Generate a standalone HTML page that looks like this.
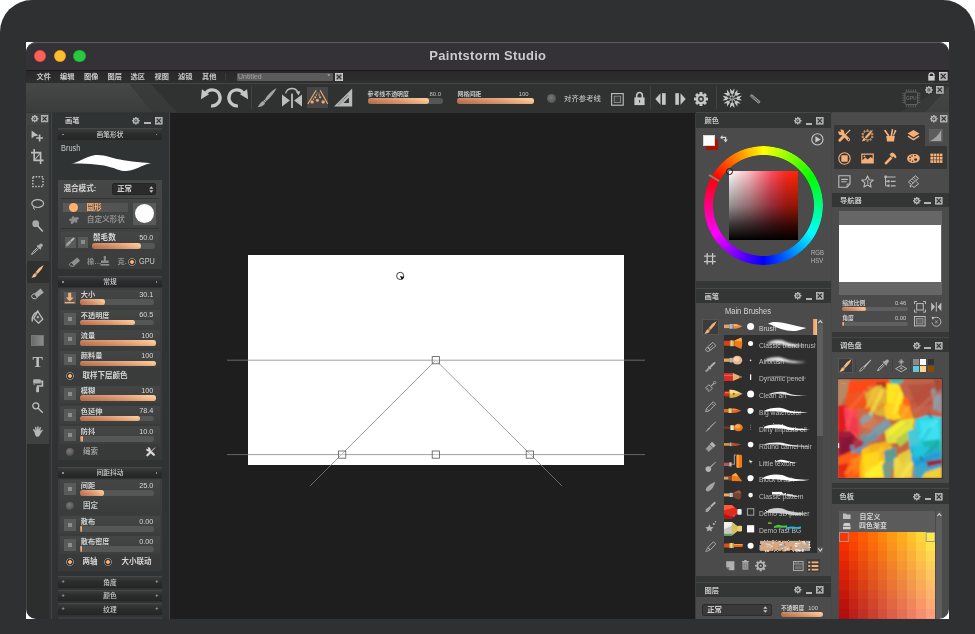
<!DOCTYPE html>
<html lang="zh"><head><meta charset="utf-8"><title>Paintstorm Studio</title>
<style>
html,body{margin:0;padding:0;background:#fff;}
body{width:975px;height:634px;overflow:hidden;position:relative;font-family:"Liberation Sans","Noto Sans CJK SC",sans-serif;}
#root{position:absolute;left:0;top:0;width:975px;height:634px;overflow:hidden;will-change:transform;}
#root div{position:absolute;box-sizing:border-box;}
.t{white-space:nowrap;}
.n{transform:scaleX(0.885);transform-origin:0 0;}
.nr{transform:scaleX(0.9);transform-origin:100% 0;}
.i{position:absolute;display:block;overflow:visible;}
</style></head>
<body><div id="root">
<!-- top -->
<div style="left:0px;top:0px;width:975px;height:634px;background:#2f3032;border-radius:32px 32px 0 0;"></div><div style="left:26px;top:42px;width:923px;height:577px;background:#fff;"></div><div id="win" style="left:26px;top:42px;width:923px;height:577px;background:#1e1e1e;border-radius:10.5px 10.5px 10px 10px;overflow:hidden;"></div><div style="left:25.7px;top:41.7px;width:923.4px;height:28.8px;background:#343137;border-radius:10.5px 10.5px 0 0;border-top:1px solid #5d5b60;"></div><div style="left:33.800000000000004px;top:49.5px;width:12.6px;height:12.6px;background:#fe5f57;border-radius:50%;box-shadow:inset 0 0 0 0.6px rgba(0,0,0,0.25);"></div><div style="left:53.6px;top:49.5px;width:12.6px;height:12.6px;background:#febc2e;border-radius:50%;box-shadow:inset 0 0 0 0.6px rgba(0,0,0,0.25);"></div><div style="left:73.4px;top:49.5px;width:12.6px;height:12.6px;background:#28c840;border-radius:50%;box-shadow:inset 0 0 0 0.6px rgba(0,0,0,0.25);"></div><div class="t" style="left:26px;top:48.1px;font-size:13px;color:#cbcacc;font-weight:700;width:923.6px;text-align:center;line-height:16px;letter-spacing:0.3px;">Paintstorm Studio</div><div style="left:25.7px;top:70.2px;width:923.4px;height:12.8px;background:linear-gradient(180deg,#29292a,#2e2f2f);border-top:1px solid #19191a;"></div><div class="t" style="left:36.5px;top:71.9px;font-size:7.2px;color:#cacaca;font-weight:700;line-height:10px;">文件</div><div class="t" style="left:60px;top:71.9px;font-size:7.2px;color:#cacaca;font-weight:700;line-height:10px;">编辑</div><div class="t" style="left:84px;top:71.9px;font-size:7.2px;color:#cacaca;font-weight:700;line-height:10px;">图像</div><div class="t" style="left:107.5px;top:71.9px;font-size:7.2px;color:#cacaca;font-weight:700;line-height:10px;">图层</div><div class="t" style="left:130.5px;top:71.9px;font-size:7.2px;color:#cacaca;font-weight:700;line-height:10px;">选区</div><div class="t" style="left:154.5px;top:71.9px;font-size:7.2px;color:#cacaca;font-weight:700;line-height:10px;">视图</div><div class="t" style="left:178px;top:71.9px;font-size:7.2px;color:#cacaca;font-weight:700;line-height:10px;">滤镜</div><div class="t" style="left:202px;top:71.9px;font-size:7.2px;color:#cacaca;font-weight:700;line-height:10px;">其他</div><div style="left:225px;top:73px;width:1px;height:8px;background:#3a3a3a;"></div><div style="left:236.5px;top:72.5px;width:96px;height:8.6px;background:#5b5b5b;border-radius:1px;"></div><div class="t" style="left:238px;top:72.2px;font-size:7px;color:#a4a4a4;line-height:10px;">Untitled</div><div class="t" style="left:327.5px;top:71.5px;font-size:6px;color:#ccc;line-height:8px;">*</div><svg class="i" style="left:334.8px;top:72.8px;" width="8" height="8" viewBox="0 0 16 16"><rect x="0.8" y="0.8" width="14.4" height="14.4" fill="#a4a4a4" stroke="#d8d8d8" stroke-width="1.6"/><path d="M3.6 3.6 L12.4 12.4 M12.4 3.6 L3.6 12.4" stroke="#2e2e2e" stroke-width="2.3"/></svg><svg class="i" style="left:927.5px;top:71.8px;" width="7" height="9" viewBox="0 0 7 9"><path d="M3.5 4.5V3a2.5 2.5 0 0 1 5 0v1.5" transform="translate(-2.5 0.3)" fill="none" stroke="#ccc" stroke-width="1.3"/><rect x="0.3" y="4" width="6.4" height="4.6" fill="#ccc"/></svg><svg class="i" style="left:939px;top:72.2px;" width="8.5" height="8.5" viewBox="0 0 16 16"><rect x="0.8" y="0.8" width="14.4" height="14.4" fill="#a4a4a4" stroke="#d8d8d8" stroke-width="1.6"/><path d="M3.6 3.6 L12.4 12.4 M12.4 3.6 L3.6 12.4" stroke="#2e2e2e" stroke-width="2.3"/></svg><div style="left:26px;top:83px;width:923px;height:29.5px;background:#2f3231;border-top:1px solid #444645;"></div><div style="left:26px;top:84px;width:170px;height:28.5px;background:linear-gradient(180deg,#464747,#3a3b3b);clip-path:polygon(0 0,103.5px 0,127px 100%,0 100%);"></div><div style="left:26px;top:84px;width:170px;height:28.5px;background:linear-gradient(180deg,#3a3c3b,#373938);clip-path:polygon(103.5px 0,124.5px 0,151px 100%,127px 100%);"></div><div style="left:870px;top:84px;width:79px;height:28.5px;background:linear-gradient(180deg,#454646,#3f4040);clip-path:polygon(100% 2px,100% 100%,55px 100%);"></div><div style="left:870px;top:84px;width:79px;height:28.5px;background:#373938;clip-path:polygon(100% 0,100% 2px,55px 100%,29px 100%);"></div>
<!-- toolbar -->
<svg class="i" style="left:200px;top:87px;" width="23" height="22" viewBox="0 0 23 22"><path d="M6.15 5.5 A8 8 0 1 1 11.1 18.8" fill="none" stroke="#c6c6c6" stroke-width="3.3"/><path d="M1.9 2.3 L0.9 12.3 L9.1 7.3 Z" fill="#c6c6c6"/></svg><svg class="i" style="left:225.6px;top:87px;" width="23" height="22" viewBox="0 0 23 22"><g transform="translate(23 0) scale(-1 1)"><path d="M6.15 5.5 A8 8 0 1 1 11.1 18.8" fill="none" stroke="#c6c6c6" stroke-width="3.3"/><path d="M1.9 2.3 L0.9 12.3 L9.1 7.3 Z" fill="#c6c6c6"/></g></svg><div style="left:251.3px;top:86px;width:1px;height:23px;background:#414342;"></div><svg class="i" style="left:256.6px;top:88px;" width="20" height="20" viewBox="0 0 20 20"><path d="M19.5 0 Q17 6 9.5 13 L7.7 11.4 Q13.2 3.2 19.5 0 Z" fill="#a6a6a6"/><path d="M9.1 13.4 L7.3 11.8 L6.5 12.7 L8.3 14.3 Z" fill="#c9c9c9"/><path d="M8 14.7 C7.8 17.4 4 18.8 0.5 19.3 C2.4 17.4 3 14.4 6.2 13.1 Z" fill="#a6a6a6"/></svg><svg class="i" style="left:282.3px;top:88px;" width="20" height="20" viewBox="0 0 20 20"><path d="M0 6.4 L0 18.6 L7.9 12.5 Z M20 6.4 L20 18.6 L12.1 12.5 Z" fill="#bdbdbd"/><rect x="9.1" y="5.6" width="1.8" height="14.4" fill="#bdbdbd"/><path d="M3.6 5.4 A6.6 6.6 0 0 1 16 4.4" fill="none" stroke="#bdbdbd" stroke-width="1.3"/><path d="M13.6 3.6 L18.4 3.2 L16.6 7.6 Z" fill="#bdbdbd"/></svg><div style="left:307px;top:87.2px;width:21.2px;height:20.8px;background:#464646;"></div><svg class="i" style="left:307px;top:87.2px;" width="21.2" height="20.8" viewBox="0 0 21.2 20.8"><path d="M9.2 3.2 L0.8 17 M13.2 3.2 L20.8 17" stroke="#f2aa6c" stroke-width="1.1" fill="none"/><circle cx="5.1" cy="14.9" r="1.7" fill="#f2aa6c"/><circle cx="16.2" cy="14.9" r="1.7" fill="#f2aa6c"/><circle cx="10.4" cy="13.2" r="1.5" fill="#f2aa6c"/><circle cx="8.3" cy="10.2" r="1.05" fill="#f2aa6c"/><circle cx="13" cy="10.2" r="1.05" fill="#f2aa6c"/><circle cx="6.6" cy="12" r="0.8" fill="#f2aa6c"/><circle cx="9.5" cy="8" r="0.75" fill="#f2aa6c"/><circle cx="12.2" cy="8" r="0.75" fill="#f2aa6c"/><circle cx="10" cy="5.9" r="0.5" fill="#f2aa6c"/><circle cx="12.1" cy="5.9" r="0.5" fill="#f2aa6c"/></svg><svg class="i" style="left:334px;top:88.2px;" width="19" height="19" viewBox="0 0 19 19"><path fill-rule="evenodd" d="M18.2 0.6 L18.2 18.6 L0 18.6 Z M14.9 9.6 L14.9 14.9 L9.6 14.9 Z" fill="#b9b9b9"/><path d="M4.6 16.6 L14.6 6.6" stroke="#555" stroke-width="1.1" stroke-dasharray="0.7 0.9"/></svg><div class="t" style="left:367.6px;top:90px;font-size:5.9px;color:#c4c4c4;font-weight:700;line-height:8px;">参考线不透明度</div><div class="t" style="left:410px;top:90px;font-size:5.9px;color:#c4c4c4;width:31px;text-align:right;line-height:8px;">80.0</div><div style="left:367.6px;top:98.3px;width:75.4px;height:5.4px;background:#565656;border-radius:2.7px;"></div><div style="left:367.6px;top:98.3px;width:61.800000000000004px;height:5.4px;background:linear-gradient(180deg,rgba(255,255,255,0.16),rgba(255,255,255,0) 45%,rgba(0,0,0,0.1)),linear-gradient(90deg,#bf7653 0%,#e09c72 55%,#ffc892 100%);border-radius:2.7px;"></div><div class="t" style="left:457.6px;top:90px;font-size:5.9px;color:#c4c4c4;font-weight:700;line-height:8px;">网格间距</div><div class="t" style="left:498px;top:90px;font-size:5.9px;color:#c4c4c4;width:30.5px;text-align:right;line-height:8px;">100</div><div style="left:457.2px;top:98.3px;width:76.6px;height:5.4px;background:#565656;border-radius:2.7px;"></div><div style="left:457.2px;top:98.3px;width:76.6px;height:5.4px;background:linear-gradient(180deg,rgba(255,255,255,0.16),rgba(255,255,255,0) 45%,rgba(0,0,0,0.1)),linear-gradient(90deg,#bf7653 0%,#e09c72 55%,#ffc892 100%);border-radius:2.7px;"></div><div style="left:546.6px;top:93.9px;width:9px;height:9px;border-radius:50%;background:radial-gradient(circle at 45% 40%,#777,#5a5a5a 60%,#444);"></div><div class="t" style="left:564px;top:93px;font-size:7.4px;color:#bcbcbc;font-weight:500;line-height:11px;">对齐参考线</div><svg class="i" style="left:610.6px;top:92.6px;" width="13" height="13" viewBox="0 0 13 13"><rect x="0.6" y="0.6" width="11.6" height="11.6" fill="none" stroke="#c2c2c2" stroke-width="1.1"/><rect x="3.2" y="3.2" width="6.4" height="6.4" fill="#3d3f3e" stroke="#8c8c8c" stroke-width="0.9"/></svg><svg class="i" style="left:633.6px;top:91.4px;" width="11" height="14.5" viewBox="0 0 11 14.5"><path d="M2.7 7V4.3a2.8 2.8 0 0 1 5.6 0V7" fill="none" stroke="#c6c6c6" stroke-width="1.6"/><rect x="0.4" y="6.4" width="10.2" height="7.7" fill="#c6c6c6"/><rect x="5" y="9" width="1.1" height="2.6" fill="#444"/></svg><div style="left:650.2px;top:86px;width:1px;height:23px;background:#414342;"></div><svg class="i" style="left:655px;top:93px;" width="11" height="12" viewBox="0 0 11 12"><path d="M0.3 6 L5.5 0.2 L5.5 11.8 Z" fill="#c6c6c6"/><rect x="7" y="0.2" width="3.7" height="11.6" fill="#c6c6c6"/></svg><svg class="i" style="left:674.6px;top:93px;" width="11" height="12" viewBox="0 0 11 12"><path d="M10.7 6 L5.5 0.2 L5.5 11.8 Z" fill="#c6c6c6"/><rect x="0.3" y="0.2" width="3.6" height="11.6" fill="#c6c6c6"/></svg><svg class="i" style="left:694.4px;top:92px;" width="14" height="14" viewBox="0 0 14 14"><g fill="#c6c6c6"><rect x="5.5" y="0" width="3" height="4" rx="0.5" transform="rotate(0 7 7)"/><rect x="5.5" y="0" width="3" height="4" rx="0.5" transform="rotate(45 7 7)"/><rect x="5.5" y="0" width="3" height="4" rx="0.5" transform="rotate(90 7 7)"/><rect x="5.5" y="0" width="3" height="4" rx="0.5" transform="rotate(135 7 7)"/><rect x="5.5" y="0" width="3" height="4" rx="0.5" transform="rotate(180 7 7)"/><rect x="5.5" y="0" width="3" height="4" rx="0.5" transform="rotate(225 7 7)"/><rect x="5.5" y="0" width="3" height="4" rx="0.5" transform="rotate(270 7 7)"/><rect x="5.5" y="0" width="3" height="4" rx="0.5" transform="rotate(315 7 7)"/><circle cx="7" cy="7" r="5.2"/></g><circle cx="7" cy="7" r="2.9" fill="#333"/><circle cx="7" cy="7" r="1.5" fill="#c6c6c6"/></svg><div style="left:716.4px;top:86px;width:1px;height:23px;background:#414342;"></div><svg class="i" style="left:722px;top:88px;" width="20.4" height="20.4" viewBox="0 0 20 20"><g fill="#c6c6c6"><path d="M7.7 0.4 L10 2.9 L12.3 0.4 L11.7 4.9 L10 6.3 L8.3 4.9 Z" transform="rotate(0 10 10)"/><path d="M7.7 0.4 L10 2.9 L12.3 0.4 L11.7 4.9 L10 6.3 L8.3 4.9 Z" transform="rotate(45 10 10)"/><path d="M7.7 0.4 L10 2.9 L12.3 0.4 L11.7 4.9 L10 6.3 L8.3 4.9 Z" transform="rotate(90 10 10)"/><path d="M7.7 0.4 L10 2.9 L12.3 0.4 L11.7 4.9 L10 6.3 L8.3 4.9 Z" transform="rotate(135 10 10)"/><path d="M7.7 0.4 L10 2.9 L12.3 0.4 L11.7 4.9 L10 6.3 L8.3 4.9 Z" transform="rotate(180 10 10)"/><path d="M7.7 0.4 L10 2.9 L12.3 0.4 L11.7 4.9 L10 6.3 L8.3 4.9 Z" transform="rotate(225 10 10)"/><path d="M7.7 0.4 L10 2.9 L12.3 0.4 L11.7 4.9 L10 6.3 L8.3 4.9 Z" transform="rotate(270 10 10)"/><path d="M7.7 0.4 L10 2.9 L12.3 0.4 L11.7 4.9 L10 6.3 L8.3 4.9 Z" transform="rotate(315 10 10)"/></g><circle cx="10" cy="10" r="3.6" fill="#2f3231"/><path d="M10 6.2V13.8M6.2 10H13.8M7.3 7.3L12.7 12.7M12.7 7.3L7.3 12.7" stroke="#bdbdbd" stroke-width="1"/><circle cx="10" cy="10" r="1.3" fill="#2f3231"/><circle cx="10" cy="10" r="0.6" fill="#c6c6c6"/></svg><svg class="i" style="left:749.6px;top:94px;" width="11" height="10" viewBox="0 0 11 10"><path d="M1.6 0.6 L10 7.6 L8.6 9.2 L0.4 2.2 Z" fill="none" stroke="#b4b4b4" stroke-width="0.9"/><path d="M1.2 1.4 L9.2 8.4" stroke="#b4b4b4" stroke-width="0.6"/></svg><svg class="i" style="left:901.6px;top:89.4px;" width="18.6" height="18.6" viewBox="0 0 18.6 18.6"><rect x="3" y="3" width="12.6" height="12.6" rx="1.5" fill="none" stroke="#636564" stroke-width="1"/><path d="M4.4 0.3V3 M4.4 15.6V18.3 M0.3 4.4H3 M15.6 4.4H18.3" stroke="#636564" stroke-width="0.8"/><path d="M6.7 0.3V3 M6.7 15.6V18.3 M0.3 6.7H3 M15.6 6.7H18.3" stroke="#636564" stroke-width="0.8"/><path d="M9.0 0.3V3 M9.0 15.6V18.3 M0.3 9.0H3 M15.6 9.0H18.3" stroke="#636564" stroke-width="0.8"/><path d="M11.3 0.3V3 M11.3 15.6V18.3 M0.3 11.3H3 M15.6 11.3H18.3" stroke="#636564" stroke-width="0.8"/><path d="M13.6 0.3V3 M13.6 15.6V18.3 M0.3 13.6H3 M15.6 13.6H18.3" stroke="#636564" stroke-width="0.8"/><text x="9.3" y="11.3" font-size="5" font-weight="700" text-anchor="middle" fill="#636564" font-family="Liberation Sans, sans-serif">GPU</text></svg><svg class="i" style="left:925.4px;top:85.6px;" width="7.8" height="7.8" viewBox="0 0 16 16"><g fill="#b9b9b9"><rect x="6.5" y="0.2" width="3" height="4" rx="0.5" transform="rotate(0 8 8)"/><rect x="6.5" y="0.2" width="3" height="4" rx="0.5" transform="rotate(45 8 8)"/><rect x="6.5" y="0.2" width="3" height="4" rx="0.5" transform="rotate(90 8 8)"/><rect x="6.5" y="0.2" width="3" height="4" rx="0.5" transform="rotate(135 8 8)"/><rect x="6.5" y="0.2" width="3" height="4" rx="0.5" transform="rotate(180 8 8)"/><rect x="6.5" y="0.2" width="3" height="4" rx="0.5" transform="rotate(225 8 8)"/><rect x="6.5" y="0.2" width="3" height="4" rx="0.5" transform="rotate(270 8 8)"/><rect x="6.5" y="0.2" width="3" height="4" rx="0.5" transform="rotate(315 8 8)"/><circle cx="8" cy="8" r="5.9"/></g><circle cx="8" cy="8" r="3.3" fill="#3a3a3a"/><circle cx="8" cy="8" r="1.5" fill="#b9b9b9"/></svg><svg class="i" style="left:936.4px;top:85.8px;" width="7.6" height="7.6" viewBox="0 0 16 16"><rect x="0.8" y="0.8" width="14.4" height="14.4" fill="#a4a4a4" stroke="#c4c4c4" stroke-width="1.6"/><path d="M3.6 3.6 L12.4 12.4 M12.4 3.6 L3.6 12.4" stroke="#2e2e2e" stroke-width="2.3"/></svg>
<!-- left -->
<div style="left:26px;top:112.5px;width:146px;height:506.5px;background:#2c2e2e;border-radius:0 0 0 7px;"></div><div style="left:26px;top:112.5px;width:23.5px;height:331.5px;background:#3f4040;"></div><div style="left:26px;top:112.5px;width:23.5px;height:12.5px;background:#434444;"></div><svg class="i" style="left:30.6px;top:115.2px;" width="7.4" height="7.4" viewBox="0 0 16 16"><g fill="#b9b9b9"><rect x="6.5" y="0.2" width="3" height="4" rx="0.5" transform="rotate(0 8 8)"/><rect x="6.5" y="0.2" width="3" height="4" rx="0.5" transform="rotate(45 8 8)"/><rect x="6.5" y="0.2" width="3" height="4" rx="0.5" transform="rotate(90 8 8)"/><rect x="6.5" y="0.2" width="3" height="4" rx="0.5" transform="rotate(135 8 8)"/><rect x="6.5" y="0.2" width="3" height="4" rx="0.5" transform="rotate(180 8 8)"/><rect x="6.5" y="0.2" width="3" height="4" rx="0.5" transform="rotate(225 8 8)"/><rect x="6.5" y="0.2" width="3" height="4" rx="0.5" transform="rotate(270 8 8)"/><rect x="6.5" y="0.2" width="3" height="4" rx="0.5" transform="rotate(315 8 8)"/><circle cx="8" cy="8" r="5.9"/></g><circle cx="8" cy="8" r="3.3" fill="#3a3a3a"/><circle cx="8" cy="8" r="1.5" fill="#b9b9b9"/></svg><svg class="i" style="left:40.6px;top:115.4px;" width="7.2" height="7.2" viewBox="0 0 16 16"><rect x="0.8" y="0.8" width="14.4" height="14.4" fill="#a4a4a4" stroke="#c4c4c4" stroke-width="1.6"/><path d="M3.6 3.6 L12.4 12.4 M12.4 3.6 L3.6 12.4" stroke="#2e2e2e" stroke-width="2.3"/></svg><div style="left:26px;top:260.5px;width:23.5px;height:22.5px;background:#2f3131;"></div><div style="left:49.4px;top:112.5px;width:2.2px;height:506.5px;background:#323434;"></div><div style="left:51.4px;top:112.5px;width:0.8px;height:506.5px;background:#434545;"></div><div style="left:25.7px;top:112.5px;width:0.8px;height:497px;background:#454646;"></div><svg class="i" style="left:31px;top:130px;" width="13.4" height="12" viewBox="0 0 13.4 12"><path d="M0.6 0.4 L0.6 8.4 L3.2 6.2 L7.4 5.4 Z" fill="#bdbdbd"/><path d="M8.6 4.6V11.4 M5.2 8H12" stroke="#bdbdbd" stroke-width="1.7" fill="none"/></svg><svg class="i" style="left:31.4px;top:148.8px;" width="13" height="15.4" viewBox="0 0 13 15.4"><path d="M3.2 0V11.4H12.6 M0 3.6H9.6V15" stroke="#bdbdbd" stroke-width="1.6" fill="none"/><path d="M3.6 11 L9.4 4" stroke="#bdbdbd" stroke-width="1.1"/></svg><svg class="i" style="left:31.8px;top:175.6px;" width="12" height="11.4" viewBox="0 0 12 11.4"><rect x="0.8" y="0.8" width="10.2" height="9.6" fill="none" stroke="#bdbdbd" stroke-width="1.5" stroke-dasharray="1.5 1.4"/></svg><svg class="i" style="left:31.4px;top:199px;" width="13.4" height="12" viewBox="0 0 13.4 12"><ellipse cx="6.7" cy="4.6" rx="5.9" ry="3.9" fill="none" stroke="#bdbdbd" stroke-width="1.2"/><path d="M3 7.6 C2 8.6 2.6 10 4 10.6" fill="none" stroke="#bdbdbd" stroke-width="1"/></svg><svg class="i" style="left:32px;top:220.4px;" width="12" height="12.6" viewBox="0 0 12 12.6"><circle cx="3.7" cy="3.7" r="3.4" fill="#a9a9a9"/><path d="M5.6 5.8 L10.8 11.6" stroke="#bdbdbd" stroke-width="1.5"/></svg><svg class="i" style="left:31.4px;top:243.4px;" width="12.4" height="12" viewBox="0 0 12.4 12"><path d="M9.6 0.4 C11.2 0.2 12.2 1.4 11.8 2.8 L9.8 5.2 L10.4 5.8 L9.4 6.8 L5.6 3 L6.6 2 L7.2 2.6 Z" fill="#a9a9a9"/><path d="M6.4 4.6 L1.6 9.4 L0.6 11.4 L2.6 10.4 L7.6 5.6" fill="none" stroke="#bdbdbd" stroke-width="1"/></svg><svg class="i" style="left:31.2px;top:265.2px;" width="13" height="13" viewBox="0 0 13 13"><path d="M12.7 0.1 Q11.4 4.7 6.7 8.7 L4.8 7.1 Q8.4 2 12.7 0.1 Z" fill="#f7b882"/><path d="M6.4 9.1 L4.4 7.4 L3.9 8 L5.9 9.7 Z" fill="#ffdcbc"/><path d="M5.6 10 C5.4 11.9 3.2 12.6 0.4 12.8 C1.8 11.4 1.8 9.4 3.6 8.3 Z" fill="#f7b882"/></svg><svg class="i" style="left:31.4px;top:288.4px;" width="13.4" height="11.4" viewBox="0 0 13.4 11.4"><path d="M9.6 0.6 L12.8 4.4 L6.6 9.2 L3.6 5.4 Z" fill="#a9a9a9"/><path d="M3.4 5.6 L6.4 9.4 L4.4 10.8 L1.8 10.4 L0.6 8.4 C0.4 7.6 1 7 1.4 6.8 Z" fill="none" stroke="#bdbdbd" stroke-width="1"/></svg><svg class="i" style="left:31.4px;top:310.4px;" width="12.8" height="13.8" viewBox="0 0 12.8 13.8"><path d="M6.7 1.4 L11.8 9.2 L7.5 13.2 L2.6 8.4 Z" fill="#4a4b4b" stroke="#bdbdbd" stroke-width="1.2" stroke-linejoin="round"/><path d="M6.5 1.6 C3.2 3.2 0.8 6.6 1.2 11" fill="none" stroke="#bdbdbd" stroke-width="1.3" stroke-linecap="round"/><circle cx="6.8" cy="7.2" r="1.1" fill="#bdbdbd"/><path d="M6.7 0.2 V2" stroke="#bdbdbd" stroke-width="1.4"/></svg><div style="left:31.2px;top:334.8px;width:13px;height:11px;background:linear-gradient(90deg,#6a6a6a,#8c8c8c);border:0.6px solid #777;"></div><div class="t" style="left:31.2px;top:353.2px;font-size:15.5px;color:#c2c2c2;font-weight:700;width:13px;text-align:center;line-height:17px;font-family:'Liberation Serif',serif;">T</div><svg class="i" style="left:33px;top:379px;" width="10.4" height="13.4" viewBox="0 0 10.4 13.4"><rect x="0.2" y="0.2" width="7.6" height="4.4" rx="0.9" fill="#b0b0b0"/><path d="M7.6 2.4 H9.4 V7 H4.6 V8.8" fill="none" stroke="#bdbdbd" stroke-width="1.7"/><rect x="3.2" y="8.2" width="2.8" height="5" fill="#bdbdbd"/><path d="M1.2 4.4 V6.2" stroke="#a9a9a9" stroke-width="1"/></svg><svg class="i" style="left:32px;top:402.4px;" width="11.6" height="11.6" viewBox="0 0 11.6 11.6"><circle cx="3.8" cy="3.8" r="3" fill="none" stroke="#bdbdbd" stroke-width="1.3"/><path d="M6 6 L10.8 10.8" stroke="#bdbdbd" stroke-width="1.4"/></svg><svg class="i" style="left:32.2px;top:425.6px;" width="11" height="11" viewBox="0 0 11 11"><path d="M2.6 6.4 L1.2 4.2 C0.6 3.2 1.8 2.6 2.4 3.4 L3.4 4.8 L3 1.6 C2.9 0.6 4.2 0.5 4.4 1.4 L4.9 4.2 L5.2 0.9 C5.3 -0.1 6.6 0 6.6 0.9 L6.6 4.2 L7.6 1.6 C7.9 0.7 9.1 1.1 8.9 2 L8.2 5.2 L9.6 4 C10.3 3.4 11.1 4.2 10.5 4.9 L8.6 7.6 C8.2 9.6 7 10.8 5.6 10.8 C4 10.8 3.2 9.6 2.6 6.4 Z" fill="#b6b6b6"/></svg><div style="left:52px;top:112.5px;width:117px;height:506.5px;background:#303333;"></div><div style="left:169px;top:112.5px;width:1.3px;height:506.5px;background:#414343;"></div><div class="t" style="left:65px;top:115.9px;font-size:7.3px;color:#c6c6c6;font-weight:700;line-height:10px;">画笔</div><svg class="i" style="left:132.2px;top:116.7px;" width="7.7" height="7.7" viewBox="0 0 16 16"><g fill="#b9b9b9"><rect x="6.5" y="0.2" width="3" height="4" rx="0.5" transform="rotate(0 8 8)"/><rect x="6.5" y="0.2" width="3" height="4" rx="0.5" transform="rotate(45 8 8)"/><rect x="6.5" y="0.2" width="3" height="4" rx="0.5" transform="rotate(90 8 8)"/><rect x="6.5" y="0.2" width="3" height="4" rx="0.5" transform="rotate(135 8 8)"/><rect x="6.5" y="0.2" width="3" height="4" rx="0.5" transform="rotate(180 8 8)"/><rect x="6.5" y="0.2" width="3" height="4" rx="0.5" transform="rotate(225 8 8)"/><rect x="6.5" y="0.2" width="3" height="4" rx="0.5" transform="rotate(270 8 8)"/><rect x="6.5" y="0.2" width="3" height="4" rx="0.5" transform="rotate(315 8 8)"/><circle cx="8" cy="8" r="5.9"/></g><circle cx="8" cy="8" r="3.3" fill="#3a3a3a"/><circle cx="8" cy="8" r="1.5" fill="#b9b9b9"/></svg><div style="left:143.8px;top:122.1px;width:6.8px;height:2px;background:#b4b4b4;"></div><svg class="i" style="left:154.5px;top:116.9px;" width="7.5" height="7.5" viewBox="0 0 16 16"><rect x="0.8" y="0.8" width="14.4" height="14.4" fill="#a4a4a4" stroke="#c4c4c4" stroke-width="1.6"/><path d="M3.6 3.6 L12.4 12.4 M12.4 3.6 L3.6 12.4" stroke="#2e2e2e" stroke-width="2.3"/></svg><div style="left:57.8px;top:128.2px;width:104.4px;height:11.4px;background:linear-gradient(180deg,#3a3d3c 0%,#2b2d2d 45%,#242626 100%);border-top:1px solid #454847;"></div><div class="t" style="left:57.8px;top:129.79999999999998px;font-size:6.7px;color:#cfcfcf;font-weight:500;width:104.4px;text-align:center;line-height:10px;">画笔形状</div><div style="left:62.0px;top:134.0px;width:1.6px;height:1.4px;background:#8e8e8e;"></div><div style="left:155.8px;top:134.0px;width:1.6px;height:1.4px;background:#8e8e8e;"></div><div class="t n" style="left:61px;top:142.5px;font-size:8.4px;color:#c9c9c9;line-height:10px;">Brush</div><svg class="i" style="left:70px;top:153px;" width="82" height="21" viewBox="0 0 82 21"><path d="M1 10.6 C8 9.6 14 4.6 23 2.4 C33 0.6 40 4.8 50 6.6 C60 8.6 68 9.2 81 10.2 C74 11.2 68 15.6 60 17.6 C52 19.4 46 15.2 38 13.4 C28 11.2 14 10.6 1 10.6 Z" fill="#fff"/></svg><div style="left:57.8px;top:180px;width:104.4px;height:89.2px;background:linear-gradient(180deg,#464848,#3b3d3d);"></div><div class="t" style="left:63.4px;top:184.2px;font-size:7.6px;color:#d6d6d6;font-weight:700;line-height:10px;">混合模式:</div><div style="left:112px;top:183.4px;width:44.2px;height:11.2px;background:#2a2b2b;border-radius:2px;border:1px solid #242424;"></div><div class="t" style="left:117.2px;top:184.2px;font-size:7.4px;color:#d6d6d6;font-weight:700;line-height:10px;">正常</div><svg class="i" style="left:148.6px;top:185.6px;" width="4.6" height="7" viewBox="0 0 4.6 7"><path d="M2.3 0.2 L4.4 2.8 H0.2 Z M2.3 6.8 L4.4 4.2 H0.2 Z" fill="#c8c8c8"/></svg><div style="left:61px;top:198px;width:98px;height:1px;background:#333535;"></div><div style="left:63.4px;top:203px;width:65px;height:9.4px;background:linear-gradient(90deg,#5a5a5a,#525252);"></div><div style="left:69.4px;top:203.2px;width:9px;height:9px;background:#ffb06a;border-radius:50%;"></div><div class="t" style="left:86.4px;top:202.6px;font-size:7.6px;color:#ffb070;font-weight:700;line-height:10px;">圆形</div><svg class="i" style="left:68.8px;top:215.6px;" width="10.6" height="8.6" viewBox="0 0 10.6 8.6"><path d="M3.4 0.6 C4.6 -0.2 5.6 0.8 5.4 2 C6.6 1 8.8 0.6 9.6 1.8 C10.4 3 9 4 7.8 4.2 C8.8 5 8.6 6.6 7.4 6.8 C6.4 7 5.8 6 5.6 5.2 C5 6.6 3.8 8.4 2.4 8 C1.2 7.6 1.6 6 2.4 5.2 C1.2 5.4 0 4.8 0.2 3.6 C0.4 2.4 2 2.4 3 2.8 C2.6 2 2.6 1.2 3.4 0.6 Z" fill="#8a8c8c"/></svg><div class="t" style="left:86.8px;top:214.8px;font-size:7.6px;color:#8d8f8f;font-weight:700;line-height:10px;">自定义形状</div><div style="left:133px;top:202.8px;width:23.2px;height:22.2px;background:#5a5a5a;"></div><div style="left:135px;top:204.2px;width:19.2px;height:19.2px;background:#fdfdfd;border-radius:50%;"></div><div style="left:61px;top:228.4px;width:98px;height:1px;background:#333535;"></div><div style="left:61px;top:232.4px;width:97.8px;height:20px;background:linear-gradient(180deg,#454747,#3c3e3e);"></div><div style="left:64.6px;top:236.8px;width:11px;height:11px;background:#5a5a5a;"></div><svg class="i" style="left:65.2px;top:237.4px;" width="10" height="10" viewBox="0 0 10 10"><path d="M8.6 0.4 L9.6 1.4 L6.6 4.8 L5.2 3.4 Z" fill="#c4c4c4"/><path d="M4.8 3.8 L6.2 5.2 L3.6 8.4 L0.6 9.6 L1.6 6.6 Z" fill="#b0b0b0"/><path d="M1 9 L3 6 M2 9.4 L4.4 6.4" stroke="#6a6a6a" stroke-width="0.5"/></svg><div style="left:77.6px;top:236.8px;width:10.6px;height:11px;background:#5a5a5a;"></div><div style="left:80.8px;top:240.20000000000002px;width:4.2px;height:4.2px;background:#8d8d8d;"></div><div class="t" style="left:93px;top:232.8px;font-size:7.6px;color:#d6d6d6;font-weight:700;line-height:10px;">鬃毛数</div><div class="t nr" style="left:120px;top:232.9px;font-size:8.1px;color:#d6d6d6;width:33.4px;text-align:right;line-height:10px;">50.0</div><div style="left:92.2px;top:243px;width:63px;height:5.8px;background:#555656;border-radius:2.9px;"></div><div style="left:92.2px;top:243px;width:49.0px;height:5.8px;background:linear-gradient(180deg,rgba(255,255,255,0.16),rgba(255,255,255,0) 45%,rgba(0,0,0,0.1)),linear-gradient(90deg,#bf7653 0%,#e09c72 55%,#ffc892 100%);border-radius:2.9px;"></div><svg class="i" style="left:68.6px;top:256.6px;" width="11.6" height="9.6" viewBox="0 0 11.6 9.6"><path d="M8.2 0.4 L11.2 3.8 L5.6 8.6 L2.6 5 Z" fill="#8e9090"/><path d="M2.4 5.2 L5.4 8.8 L3.6 9.4 L1.4 9 L0.4 7.4 Z" fill="none" stroke="#a8aaaa" stroke-width="0.8"/></svg><div class="t" style="left:87px;top:256.6px;font-size:7.2px;color:#8d8f8f;font-weight:700;line-height:10px;">橡…</div><svg class="i" style="left:100.4px;top:256.4px;" width="9.6" height="10" viewBox="0 0 9.6 10"><path d="M3.6 0.8 C3.6 -0.2 6 -0.2 6 0.8 L5.6 4.6 H8.6 V7 H1 V4.6 H4 Z" fill="#8e9090"/><rect x="0.4" y="8" width="8.8" height="1.6" fill="#8e9090"/></svg><div class="t" style="left:117.6px;top:256.6px;font-size:7.2px;color:#8d8f8f;font-weight:700;line-height:10px;">克.</div><div style="left:127.6px;top:257.6px;width:8px;height:8px;border-radius:50%;background:radial-gradient(circle,#ffc48c 0,#f0a060 28%,#4a3a30 38%,#3a3a3a 55%,#8a8a8a 62%,#777 70%,rgba(0,0,0,0) 74%);"></div><div class="t n" style="left:139.4px;top:256.4px;font-size:8.3px;color:#c8c8c8;line-height:10px;">GPU</div><div style="left:57.8px;top:275.6px;width:104.4px;height:11.2px;background:linear-gradient(180deg,#3a3d3c 0%,#2b2d2d 45%,#242626 100%);border-top:1px solid #454847;"></div><div class="t" style="left:57.8px;top:277.20000000000005px;font-size:6.7px;color:#cfcfcf;font-weight:500;width:104.4px;text-align:center;line-height:10px;">常规</div><div style="left:62.0px;top:281.40000000000003px;width:1.6px;height:1.4px;background:#8e8e8e;"></div><div style="left:155.8px;top:281.40000000000003px;width:1.6px;height:1.4px;background:#8e8e8e;"></div><div style="left:57.8px;top:287.8px;width:104.4px;height:172.2px;background:linear-gradient(180deg,#3d3f3f,#383a3a);"></div><div style="left:60.4px;top:289.6px;width:99.2px;height:17.6px;background:linear-gradient(180deg,#444646,#3d3f3f);"></div><div style="left:64.2px;top:292.40000000000003px;width:11.4px;height:11.8px;background:#5a5a5a;"></div><div class="t" style="left:80.8px;top:290.1px;font-size:7.2px;color:#d0d0d0;font-weight:700;line-height:10px;">大小</div><div class="t nr" style="left:120px;top:289.90000000000003px;font-size:8.1px;color:#d6d6d6;width:33.4px;text-align:right;line-height:10px;">30.1</div><div style="left:80.4px;top:299.40000000000003px;width:74px;height:5.6px;background:#555656;border-radius:2.8px;"></div><div style="left:80.4px;top:299.40000000000003px;width:24.600000000000005px;height:5.6px;background:linear-gradient(180deg,rgba(255,255,255,0.16),rgba(255,255,255,0) 45%,rgba(0,0,0,0.1)),linear-gradient(90deg,#bf7653 0%,#e09c72 55%,#ffc892 100%);border-radius:2.8px;"></div><svg class="i" style="left:64.2px;top:292.4px;" width="11.4" height="11.8" viewBox="0 0 11.4 11.8"><path d="M4.2 0.8 H7.2 V5.4 H9.6 L5.7 9.4 L1.8 5.4 H4.2 Z" fill="#f5b078"/><rect x="0.8" y="10" width="9.8" height="1.3" fill="#f5b078"/></svg><div style="left:60.4px;top:310px;width:99.2px;height:17.6px;background:linear-gradient(180deg,#444646,#3d3f3f);"></div><div style="left:64.2px;top:312.8px;width:11.4px;height:11.8px;background:#5a5a5a;"></div><div style="left:67.80000000000001px;top:316.59999999999997px;width:4.2px;height:4.2px;background:#8d8d8d;"></div><div class="t" style="left:80.8px;top:310.5px;font-size:7.2px;color:#d0d0d0;font-weight:700;line-height:10px;">不透明度</div><div class="t nr" style="left:120px;top:310.3px;font-size:8.1px;color:#d6d6d6;width:33.4px;text-align:right;line-height:10px;">60.5</div><div style="left:80.4px;top:319.8px;width:74px;height:5.6px;background:#555656;border-radius:2.8px;"></div><div style="left:80.4px;top:319.8px;width:54.6px;height:5.6px;background:linear-gradient(180deg,rgba(255,255,255,0.16),rgba(255,255,255,0) 45%,rgba(0,0,0,0.1)),linear-gradient(90deg,#bf7653 0%,#e09c72 55%,#ffc892 100%);border-radius:2.8px;"></div><div style="left:60.4px;top:330.4px;width:99.2px;height:17.6px;background:linear-gradient(180deg,#444646,#3d3f3f);"></div><div style="left:64.2px;top:333.2px;width:11.4px;height:11.8px;background:#5a5a5a;"></div><div style="left:67.80000000000001px;top:336.99999999999994px;width:4.2px;height:4.2px;background:#8d8d8d;"></div><div class="t" style="left:80.8px;top:330.9px;font-size:7.2px;color:#d0d0d0;font-weight:700;line-height:10px;">流量</div><div class="t nr" style="left:120px;top:330.7px;font-size:8.1px;color:#d6d6d6;width:33.4px;text-align:right;line-height:10px;">100</div><div style="left:80.4px;top:340.2px;width:75.4px;height:5.6px;background:#555656;border-radius:2.8px;"></div><div style="left:80.4px;top:340.2px;width:75.4px;height:5.6px;background:linear-gradient(180deg,rgba(255,255,255,0.16),rgba(255,255,255,0) 45%,rgba(0,0,0,0.1)),linear-gradient(90deg,#bf7653 0%,#e09c72 55%,#ffc892 100%);border-radius:2.8px;"></div><div style="left:60.4px;top:350.8px;width:99.2px;height:17.6px;background:linear-gradient(180deg,#444646,#3d3f3f);"></div><div style="left:64.2px;top:353.6px;width:11.4px;height:11.8px;background:#5a5a5a;"></div><div style="left:67.80000000000001px;top:357.4px;width:4.2px;height:4.2px;background:#8d8d8d;"></div><div class="t" style="left:80.8px;top:351.3px;font-size:7.2px;color:#d0d0d0;font-weight:700;line-height:10px;">颜料量</div><div class="t nr" style="left:120px;top:351.1px;font-size:8.1px;color:#d6d6d6;width:33.4px;text-align:right;line-height:10px;">100</div><div style="left:80.4px;top:360.6px;width:75.4px;height:5.6px;background:#555656;border-radius:2.8px;"></div><div style="left:80.4px;top:360.6px;width:75.4px;height:5.6px;background:linear-gradient(180deg,rgba(255,255,255,0.16),rgba(255,255,255,0) 45%,rgba(0,0,0,0.1)),linear-gradient(90deg,#bf7653 0%,#e09c72 55%,#ffc892 100%);border-radius:2.8px;"></div><div style="left:65.8px;top:372.2px;width:8px;height:8px;border-radius:50%;background:radial-gradient(circle,#ffc48c 0,#f0a060 28%,#4a3a30 38%,#3a3a3a 55%,#8a8a8a 62%,#777 70%,rgba(0,0,0,0) 74%);"></div><div class="t" style="left:82.6px;top:371.2px;font-size:7.5px;color:#d6d6d6;font-weight:700;line-height:10px;">取样下层颜色</div><div style="left:60.4px;top:385.6px;width:99.2px;height:17.6px;background:linear-gradient(180deg,#444646,#3d3f3f);"></div><div style="left:64.2px;top:388.40000000000003px;width:11.4px;height:11.8px;background:#5a5a5a;"></div><div style="left:67.80000000000001px;top:392.2px;width:4.2px;height:4.2px;background:#8d8d8d;"></div><div class="t" style="left:80.8px;top:386.1px;font-size:7.2px;color:#d0d0d0;font-weight:700;line-height:10px;">模糊</div><div class="t nr" style="left:120px;top:385.90000000000003px;font-size:8.1px;color:#d6d6d6;width:33.4px;text-align:right;line-height:10px;">100</div><div style="left:80.4px;top:395.40000000000003px;width:75.4px;height:5.6px;background:#555656;border-radius:2.8px;"></div><div style="left:80.4px;top:395.40000000000003px;width:75.4px;height:5.6px;background:linear-gradient(180deg,rgba(255,255,255,0.16),rgba(255,255,255,0) 45%,rgba(0,0,0,0.1)),linear-gradient(90deg,#bf7653 0%,#e09c72 55%,#ffc892 100%);border-radius:2.8px;"></div><div style="left:60.4px;top:406px;width:99.2px;height:17.6px;background:linear-gradient(180deg,#444646,#3d3f3f);"></div><div style="left:64.2px;top:408.8px;width:11.4px;height:11.8px;background:#5a5a5a;"></div><div style="left:67.80000000000001px;top:412.59999999999997px;width:4.2px;height:4.2px;background:#8d8d8d;"></div><div class="t" style="left:80.8px;top:406.5px;font-size:7.2px;color:#d0d0d0;font-weight:700;line-height:10px;">色延伸</div><div class="t nr" style="left:120px;top:406.3px;font-size:8.1px;color:#d6d6d6;width:33.4px;text-align:right;line-height:10px;">78.4</div><div style="left:80.4px;top:415.8px;width:74px;height:5.6px;background:#555656;border-radius:2.8px;"></div><div style="left:80.4px;top:415.8px;width:59.6px;height:5.6px;background:linear-gradient(180deg,rgba(255,255,255,0.16),rgba(255,255,255,0) 45%,rgba(0,0,0,0.1)),linear-gradient(90deg,#bf7653 0%,#e09c72 55%,#ffc892 100%);border-radius:2.8px;"></div><div style="left:60.4px;top:426.2px;width:99.2px;height:17.6px;background:linear-gradient(180deg,#444646,#3d3f3f);"></div><div style="left:64.2px;top:429.0px;width:11.4px;height:11.8px;background:#5a5a5a;"></div><div style="left:67.80000000000001px;top:432.79999999999995px;width:4.2px;height:4.2px;background:#8d8d8d;"></div><div class="t" style="left:80.8px;top:426.7px;font-size:7.2px;color:#d0d0d0;font-weight:700;line-height:10px;">防抖</div><div class="t nr" style="left:120px;top:426.5px;font-size:8.1px;color:#d6d6d6;width:33.4px;text-align:right;line-height:10px;">10.0</div><div style="left:80.4px;top:436.0px;width:74px;height:5.6px;background:#555656;border-radius:2.8px;"></div><div style="left:80.4px;top:436.0px;width:2.96px;height:5.6px;background:linear-gradient(180deg,rgba(255,255,255,0.16),rgba(255,255,255,0) 45%,rgba(0,0,0,0.1)),linear-gradient(90deg,#bf7653 0%,#e09c72 55%,#ffc892 100%);border-radius:1.48px;"></div><div style="left:65.8px;top:447.6px;width:8px;height:8px;border-radius:50%;background:radial-gradient(circle at 42% 38%,#7a7a7a,#5c5c5c 55%,#484848 72%,rgba(0,0,0,0) 76%);"></div><div class="t" style="left:83px;top:446.6px;font-size:7.5px;color:#9a9c9c;font-weight:700;line-height:10px;">绳索</div><svg class="i" style="left:146.2px;top:446.8px;" width="9.6" height="9.6" viewBox="0 0 9.6 9.6"><g transform="scale(0.74)"><path d="M12.2 0.8 L7.2 5.8" stroke="#dadada" stroke-width="1.3"/><path d="M5.9 7.1 L1.8 11.2" stroke="#dadada" stroke-width="2.9" stroke-linecap="round"/><path d="M4.2 4.2 L10.6 10.6" stroke="#dadada" stroke-width="3" stroke-linecap="round"/><circle cx="3.3" cy="3.3" r="2.9" fill="#dadada"/><path d="M3.3 3.3 L-0.8 1.6 L1.6 -0.8 Z" fill="#3a3c3c"/></g></svg><div style="left:57.8px;top:466.6px;width:104.4px;height:11.2px;background:linear-gradient(180deg,#3a3d3c 0%,#2b2d2d 45%,#242626 100%);border-top:1px solid #454847;"></div><div class="t" style="left:57.8px;top:468.20000000000005px;font-size:6.7px;color:#cfcfcf;font-weight:500;width:104.4px;text-align:center;line-height:10px;">间距抖动</div><div style="left:62.0px;top:472.40000000000003px;width:1.6px;height:1.4px;background:#8e8e8e;"></div><div style="left:155.8px;top:472.40000000000003px;width:1.6px;height:1.4px;background:#8e8e8e;"></div><div style="left:57.8px;top:478.8px;width:104.4px;height:92.2px;background:linear-gradient(180deg,#3d3f3f,#383a3a);"></div><div style="left:60.4px;top:480.4px;width:99.2px;height:34px;background:linear-gradient(180deg,#444646,#3a3c3c);"></div><div style="left:64.2px;top:483.2px;width:11.4px;height:11.8px;background:#5a5a5a;"></div><div style="left:67.80000000000001px;top:486.99999999999994px;width:4.2px;height:4.2px;background:#8d8d8d;"></div><div class="t" style="left:80.8px;top:480.9px;font-size:7.2px;color:#d0d0d0;font-weight:700;line-height:10px;">间距</div><div class="t nr" style="left:120px;top:480.7px;font-size:8.1px;color:#d6d6d6;width:33.4px;text-align:right;line-height:10px;">25.0</div><div style="left:80.4px;top:490.2px;width:74px;height:5.6px;background:#555656;border-radius:2.8px;"></div><div style="left:80.4px;top:490.2px;width:24.0px;height:5.6px;background:linear-gradient(180deg,rgba(255,255,255,0.16),rgba(255,255,255,0) 45%,rgba(0,0,0,0.1)),linear-gradient(90deg,#bf7653 0%,#e09c72 55%,#ffc892 100%);border-radius:2.8px;"></div><div style="left:65.8px;top:502.2px;width:8px;height:8px;border-radius:50%;background:radial-gradient(circle at 42% 38%,#7a7a7a,#5c5c5c 55%,#484848 72%,rgba(0,0,0,0) 76%);"></div><div class="t" style="left:83px;top:501.2px;font-size:7.5px;color:#c4c4c4;font-weight:700;line-height:10px;">固定</div><div style="left:60.4px;top:516.2px;width:99.2px;height:17.6px;background:linear-gradient(180deg,#444646,#3d3f3f);"></div><div style="left:64.2px;top:519.0px;width:11.4px;height:11.8px;background:#5a5a5a;"></div><div style="left:67.80000000000001px;top:522.8px;width:4.2px;height:4.2px;background:#8d8d8d;"></div><div class="t" style="left:80.8px;top:516.7px;font-size:7.2px;color:#d0d0d0;font-weight:700;line-height:10px;">散布</div><div class="t nr" style="left:120px;top:516.5px;font-size:8.1px;color:#d6d6d6;width:33.4px;text-align:right;line-height:10px;">0.00</div><div style="left:80.4px;top:526.0px;width:74px;height:5.6px;background:#555656;border-radius:2.8px;"></div><div style="left:80.4px;top:526.0px;width:1.6px;height:5.6px;background:linear-gradient(180deg,rgba(255,255,255,0.16),rgba(255,255,255,0) 45%,rgba(0,0,0,0.1)),linear-gradient(90deg,#bf7653 0%,#e09c72 55%,#ffc892 100%);border-radius:0.8px;"></div><div style="left:60.4px;top:536.4px;width:99.2px;height:17.6px;background:linear-gradient(180deg,#444646,#3d3f3f);"></div><div style="left:64.2px;top:539.1999999999999px;width:11.4px;height:11.8px;background:#5a5a5a;"></div><div style="left:67.80000000000001px;top:542.9999999999999px;width:4.2px;height:4.2px;background:#8d8d8d;"></div><div class="t" style="left:80.8px;top:536.9px;font-size:7.2px;color:#d0d0d0;font-weight:700;line-height:10px;">散布密度</div><div class="t nr" style="left:120px;top:536.6999999999999px;font-size:8.1px;color:#d6d6d6;width:33.4px;text-align:right;line-height:10px;">0.00</div><div style="left:80.4px;top:546.1999999999999px;width:74px;height:5.6px;background:#555656;border-radius:2.8px;"></div><div style="left:80.4px;top:546.1999999999999px;width:1.6px;height:5.6px;background:linear-gradient(180deg,rgba(255,255,255,0.16),rgba(255,255,255,0) 45%,rgba(0,0,0,0.1)),linear-gradient(90deg,#bf7653 0%,#e09c72 55%,#ffc892 100%);border-radius:0.8px;"></div><div style="left:65.8px;top:558.2px;width:8px;height:8px;border-radius:50%;background:radial-gradient(circle,#ffc48c 0,#f0a060 28%,#4a3a30 38%,#3a3a3a 55%,#8a8a8a 62%,#777 70%,rgba(0,0,0,0) 74%);"></div><div class="t" style="left:82.4px;top:557.2px;font-size:7.5px;color:#d6d6d6;font-weight:700;line-height:10px;">两轴</div><div style="left:103.6px;top:558.2px;width:8px;height:8px;border-radius:50%;background:radial-gradient(circle,#ffc48c 0,#f0a060 28%,#4a3a30 38%,#3a3a3a 55%,#8a8a8a 62%,#777 70%,rgba(0,0,0,0) 74%);"></div><div class="t" style="left:121.6px;top:557.2px;font-size:7.5px;color:#d6d6d6;font-weight:700;line-height:10px;">大小联动</div><div style="left:57.8px;top:576.2px;width:104.4px;height:11.6px;background:linear-gradient(180deg,#3a3d3c 0%,#2b2d2d 45%,#242626 100%);border-top:1px solid #454847;"></div><div class="t" style="left:57.8px;top:577.8000000000001px;font-size:6.7px;color:#cfcfcf;font-weight:500;width:104.4px;text-align:center;line-height:10px;">角度</div><div class="t" style="left:61.4px;top:577.4000000000001px;font-size:5.5px;color:#aaa;font-weight:700;line-height:8px;">+</div><div class="t" style="left:155.20000000000002px;top:577.4000000000001px;font-size:5.5px;color:#aaa;font-weight:700;line-height:8px;">+</div><div style="left:57.8px;top:589.8px;width:104.4px;height:11.2px;background:linear-gradient(180deg,#3a3d3c 0%,#2b2d2d 45%,#242626 100%);border-top:1px solid #454847;"></div><div class="t" style="left:57.8px;top:591.4px;font-size:6.7px;color:#cfcfcf;font-weight:500;width:104.4px;text-align:center;line-height:10px;">颜色</div><div class="t" style="left:61.4px;top:591.0px;font-size:5.5px;color:#aaa;font-weight:700;line-height:8px;">+</div><div class="t" style="left:155.20000000000002px;top:591.0px;font-size:5.5px;color:#aaa;font-weight:700;line-height:8px;">+</div><div style="left:57.8px;top:603px;width:104.4px;height:11.8px;background:linear-gradient(180deg,#3a3d3c 0%,#2b2d2d 45%,#242626 100%);border-top:1px solid #454847;"></div><div class="t" style="left:57.8px;top:604.6px;font-size:6.7px;color:#cfcfcf;font-weight:500;width:104.4px;text-align:center;line-height:10px;">纹理</div><div class="t" style="left:61.4px;top:604.2px;font-size:5.5px;color:#aaa;font-weight:700;line-height:8px;">+</div><div class="t" style="left:155.20000000000002px;top:604.2px;font-size:5.5px;color:#aaa;font-weight:700;line-height:8px;">+</div><div style="left:57.8px;top:616.6px;width:104.4px;height:2.4px;background:#3a3d3c;"></div>
<!-- center -->
<div style="left:170.3px;top:112.5px;width:525.3px;height:506.5px;background:#1e1e1e;"></div><div style="left:248.3px;top:254.8px;width:375.6px;height:210.6px;background:#fff;"></div><svg class="i" style="left:0px;top:0px;" width="975" height="634" viewBox="0 0 975 634"><path d="M227 360.2H645 M227 454.6H645" stroke="#808080" stroke-width="0.75" fill="none"/><path d="M310 486 L435.8 360.2 L562 486" stroke="#808080" stroke-width="0.75" fill="none"/><rect x="432.2" y="356.59999999999997" width="7.2" height="7.2" fill="#fff" fill-opacity="0.35" stroke="#585858" stroke-width="0.8"/><rect x="338.59999999999997" y="451.0" width="7.2" height="7.2" fill="#fff" fill-opacity="0.35" stroke="#585858" stroke-width="0.8"/><rect x="432.2" y="451.0" width="7.2" height="7.2" fill="#fff" fill-opacity="0.35" stroke="#585858" stroke-width="0.8"/><rect x="526.1999999999999" y="451.0" width="7.2" height="7.2" fill="#fff" fill-opacity="0.35" stroke="#585858" stroke-width="0.8"/><circle cx="400.2" cy="275.9" r="3.6" fill="#fff" stroke="#222" stroke-width="0.85"/><path d="M400 275.8 L404.2 277.2 L401.8 280 Z" fill="#111"/></svg>
<!-- right1 -->
<div style="left:695.4px;top:112.5px;width:137px;height:506.5px;background:#484848;"></div><div style="left:695.4px;top:112.5px;width:1.2px;height:506.5px;background:#3a3c3c;"></div><div style="left:696.4px;top:112.5px;width:134.2px;height:0.9000000000000057px;background:#363838;"></div><div style="left:696.4px;top:112.2px;width:134.2px;height:0.8px;background:#464848;"></div><div style="left:696.4px;top:281.4px;width:134.2px;height:7.400000000000034px;background:#363838;"></div><div style="left:696.4px;top:287.6px;width:134.2px;height:0.8px;background:#464848;"></div><div style="left:696.4px;top:575.8px;width:134.2px;height:7.0px;background:#363838;"></div><div style="left:696.4px;top:581.5999999999999px;width:134.2px;height:0.8px;background:#464848;"></div><div style="left:696.4px;top:113.4px;width:134.2px;height:14.8px;background:#343636;"></div><div class="t" style="left:704.4px;top:116.30000000000001px;font-size:7.25px;color:#c4c4c4;font-weight:700;line-height:10px;">颜色</div><svg class="i" style="left:794.4px;top:117.15px;" width="7.5" height="7.5" viewBox="0 0 16 16"><g fill="#b9b9b9"><rect x="6.5" y="0.2" width="3" height="4" rx="0.5" transform="rotate(0 8 8)"/><rect x="6.5" y="0.2" width="3" height="4" rx="0.5" transform="rotate(45 8 8)"/><rect x="6.5" y="0.2" width="3" height="4" rx="0.5" transform="rotate(90 8 8)"/><rect x="6.5" y="0.2" width="3" height="4" rx="0.5" transform="rotate(135 8 8)"/><rect x="6.5" y="0.2" width="3" height="4" rx="0.5" transform="rotate(180 8 8)"/><rect x="6.5" y="0.2" width="3" height="4" rx="0.5" transform="rotate(225 8 8)"/><rect x="6.5" y="0.2" width="3" height="4" rx="0.5" transform="rotate(270 8 8)"/><rect x="6.5" y="0.2" width="3" height="4" rx="0.5" transform="rotate(315 8 8)"/><circle cx="8" cy="8" r="5.9"/></g><circle cx="8" cy="8" r="3.3" fill="#3a3a3a"/><circle cx="8" cy="8" r="1.5" fill="#b9b9b9"/></svg><div style="left:805.6999999999999px;top:122.60000000000001px;width:6.8px;height:2px;background:#b4b4b4;"></div><svg class="i" style="left:816.4px;top:117.15px;" width="7.5" height="7.5" viewBox="0 0 16 16"><rect x="0.8" y="0.8" width="14.4" height="14.4" fill="#a4a4a4" stroke="#c4c4c4" stroke-width="1.6"/><path d="M3.6 3.6 L12.4 12.4 M12.4 3.6 L3.6 12.4" stroke="#2e2e2e" stroke-width="2.3"/></svg><div style="left:696.4px;top:128.2px;width:134.2px;height:153.2px;background:#4b4b4b;"></div><div style="left:706.2px;top:138.8px;width:12px;height:11.4px;background:#a51208;"></div><div style="left:702.8px;top:135px;width:12.2px;height:11.2px;background:#fff;border:0.6px solid #d8d8d8;"></div><svg class="i" style="left:720px;top:134.8px;" width="8" height="7.4" viewBox="0 0 8 7.4"><path d="M1.6 2.4 H5.6 V5" stroke="#d4d4d4" stroke-width="1.3" fill="none"/><path d="M0 2.4 L2.6 0.2 L2.6 4.6 Z M5.6 7.4 L3.4 4.6 L7.8 4.6 Z" fill="#d4d4d4"/></svg><svg class="i" style="left:811.4px;top:133.4px;" width="12.8" height="12.8" viewBox="0 0 12.8 12.8"><circle cx="6.4" cy="6.4" r="5.6" fill="none" stroke="#c8c8c8" stroke-width="1.1"/><path d="M4.4 3.2 L9.8 6.4 L4.4 9.6 Z" fill="#c8c8c8"/></svg><div style="left:703.8px;top:146.0px;width:119.2px;height:119.2px;background:conic-gradient(from 0deg,#ffff00 0deg,#00ff00 60deg,#00ffff 120deg,#0000ff 180deg,#ff00ff 240deg,#ff0000 300deg,#ffff00 360deg);border-radius:50%;-webkit-mask:radial-gradient(circle,transparent 50.1px,#000 50.9px);mask:radial-gradient(circle,transparent 50.1px,#000 50.9px);"></div><div style="left:708.4px;top:176.6px;width:12px;height:2.2px;background:#8a7d78;transform:rotate(31deg);"></div><div style="left:729.4px;top:171.2px;width:68.8px;height:68.4px;background:linear-gradient(180deg,rgba(0,0,0,0) 0%,rgba(0,0,0,0.42) 50%,rgba(0,0,0,0.76) 76%,#000 100%),linear-gradient(90deg,#fff 0%,#ffb6be 30%,#ff4c5e 62%,#ff2a1e 82%,#ff2600 100%);"></div><div style="left:725.8px;top:167.6px;width:7.4px;height:7.4px;border-radius:50%;border:1.1px solid #151515;background:rgba(255,255,255,0.2);"></div><svg class="i" style="left:704px;top:253.2px;" width="11.8" height="11.6" viewBox="0 0 11.8 11.6"><path d="M3.2 0V11.6 M8.6 0V11.6 M0 3.2H11.8 M0 8.6H11.8" stroke="#c6c6c6" stroke-width="1.3" fill="none"/></svg><div class="t n" style="left:810.8px;top:249.2px;font-size:6.7px;color:#b9b9b9;line-height:8px;">RGB</div><div class="t n" style="left:810.8px;top:257px;font-size:6.7px;color:#b9b9b9;line-height:8px;">HSV</div><div style="left:696.4px;top:288.8px;width:134.2px;height:14.4px;background:#343636;"></div><div class="t" style="left:704.4px;top:291.5px;font-size:7.25px;color:#c4c4c4;font-weight:700;line-height:10px;">画笔</div><svg class="i" style="left:794.4px;top:292.35px;" width="7.5" height="7.5" viewBox="0 0 16 16"><g fill="#b9b9b9"><rect x="6.5" y="0.2" width="3" height="4" rx="0.5" transform="rotate(0 8 8)"/><rect x="6.5" y="0.2" width="3" height="4" rx="0.5" transform="rotate(45 8 8)"/><rect x="6.5" y="0.2" width="3" height="4" rx="0.5" transform="rotate(90 8 8)"/><rect x="6.5" y="0.2" width="3" height="4" rx="0.5" transform="rotate(135 8 8)"/><rect x="6.5" y="0.2" width="3" height="4" rx="0.5" transform="rotate(180 8 8)"/><rect x="6.5" y="0.2" width="3" height="4" rx="0.5" transform="rotate(225 8 8)"/><rect x="6.5" y="0.2" width="3" height="4" rx="0.5" transform="rotate(270 8 8)"/><rect x="6.5" y="0.2" width="3" height="4" rx="0.5" transform="rotate(315 8 8)"/><circle cx="8" cy="8" r="5.9"/></g><circle cx="8" cy="8" r="3.3" fill="#3a3a3a"/><circle cx="8" cy="8" r="1.5" fill="#b9b9b9"/></svg><div style="left:805.6999999999999px;top:297.8px;width:6.8px;height:2px;background:#b4b4b4;"></div><svg class="i" style="left:816.4px;top:292.35px;" width="7.5" height="7.5" viewBox="0 0 16 16"><rect x="0.8" y="0.8" width="14.4" height="14.4" fill="#a4a4a4" stroke="#c4c4c4" stroke-width="1.6"/><path d="M3.6 3.6 L12.4 12.4 M12.4 3.6 L3.6 12.4" stroke="#2e2e2e" stroke-width="2.3"/></svg><div style="left:696.4px;top:303.2px;width:134.2px;height:272.6px;background:#4b4b4b;"></div><div class="t n" style="left:724.6px;top:305.7px;font-size:8.5px;color:#d4d4d4;line-height:11px;">Main Brushes</div><div style="left:724px;top:319px;width:92.6px;height:234px;background:#2e2e2e;"></div><div style="left:724px;top:319px;width:92.6px;height:15.8px;background:#4c4c4c;"></div><div style="left:813.4px;top:319px;width:3.2px;height:15.8px;background:linear-gradient(90deg,#e09a64,#ffc088);"></div><div style="left:817.2px;top:319px;width:5.4px;height:234px;background:#474747;"></div><div style="left:817.2px;top:325.4px;width:5.4px;height:110.4px;background:#5e5e5e;"></div><div style="left:817.2px;top:319px;width:5.4px;height:6px;background:#555;"></div><svg class="i" style="left:817.6px;top:320.2px;" width="4.6" height="3.6" viewBox="0 0 4.6 3.6"><path d="M0.3 3.2 L2.3 0.6 L4.3 3.2" stroke="#d0d0d0" stroke-width="1.1" fill="none"/></svg><div style="left:817.2px;top:547px;width:5.4px;height:6px;background:#555;"></div><svg class="i" style="left:817.6px;top:548.4px;" width="4.6" height="3.6" viewBox="0 0 4.6 3.6"><path d="M0.3 0.4 L2.3 3 L4.3 0.4" stroke="#d0d0d0" stroke-width="1.1" fill="none"/></svg><div style="left:702.4px;top:319.4px;width:16.2px;height:15.8px;background:#3c3c3c;border:1px solid #555;"></div><svg class="i" style="left:704.0px;top:320.5px;" width="13.0" height="13.0" viewBox="0 0 13 13"><path d="M12.7 0.1 Q11.4 4.7 6.7 8.7 L4.8 7.1 Q8.4 2 12.7 0.1 Z" fill="#f5b078"/><path d="M6.4 9.1 L4.4 7.4 L3.9 8 L5.9 9.7 Z" fill="#ffd2a8"/><path d="M5.6 10 C5.4 11.9 3.2 12.6 0.4 12.8 C1.8 11.4 1.8 9.4 3.6 8.3 Z" fill="#f5b078"/></svg><svg class="i" style="left:704.78px;top:341.26px;" width="11.44" height="11.44" viewBox="0 0 13 13"><path d="M9 1.6 L12.4 5.4 L6.2 10.4 L3 6.6 Z" fill="none" stroke="#b4b4b4" stroke-width="1"/><path d="M2.8 6.8 L6 10.6 L4.2 11.8 L1.6 11.4 L0.6 9.4 Z" fill="none" stroke="#b4b4b4" stroke-width="1"/><path d="M5 8.4 L9 5" stroke="#b4b4b4" stroke-width="0.8"/></svg><svg class="i" style="left:704.78px;top:361.23999999999995px;" width="11.44" height="11.44" viewBox="0 0 13 13"><path d="M10.6 0.8 L12.2 2.4 L6.4 8 L4.8 6.4 Z" fill="#b4b4b4"/><path d="M4.2 6.8 L6 8.6 L2.6 12.2 L0.6 12.4 L0.8 10.4 Z" fill="#9a9a9a"/><path d="M3.6 6 L6.8 9.2" stroke="#b4b4b4" stroke-width="1.2"/></svg><svg class="i" style="left:704.78px;top:381.21999999999997px;" width="11.44" height="11.44" viewBox="0 0 13 13"><path d="M4.4 4.2 L8.4 8.2 L4.6 12 L0.6 8 Z" fill="none" stroke="#b4b4b4" stroke-width="1"/><path d="M7 5.8 L10.4 2.4" stroke="#b4b4b4" stroke-width="1.2"/><circle cx="11" cy="1.8" r="1.3" fill="none" stroke="#b4b4b4" stroke-width="0.8"/><path d="M2.6 8 L4.6 10" stroke="#b4b4b4" stroke-width="0.8"/></svg><svg class="i" style="left:704.78px;top:401.2px;" width="11.44" height="11.44" viewBox="0 0 13 13"><path d="M9.4 0.8 L12.2 3.6 L4.4 11.4 L0.8 12.2 L1.6 8.6 Z" fill="none" stroke="#b4b4b4" stroke-width="1"/><path d="M7.6 2.6 L10.4 5.4 M2 8.6 L4.4 11" stroke="#b4b4b4" stroke-width="0.8"/></svg><svg class="i" style="left:704.78px;top:421.17999999999995px;" width="11.44" height="11.44" viewBox="0 0 13 13"><path d="M12 0.6 L12.4 1 L6 7.6 L5.2 6.8 Z" fill="#b4b4b4"/><path d="M4.8 7 L6 8.2 L2 11.6 L0.6 12.4 L1.4 11 Z" fill="#b4b4b4"/></svg><svg class="i" style="left:704.78px;top:441.15999999999997px;" width="11.44" height="11.44" viewBox="0 0 13 13"><path d="M8 0.8 L12.2 5 L9.4 7.6 L5.4 3.6 Z" fill="#b4b4b4"/><path d="M5 4 L9 8 L4 12.4 L0.6 9 Z" fill="#9a9a9a"/><path d="M1.6 9.4 L3.6 11.4" stroke="#4b4b4b" stroke-width="0.6"/></svg><svg class="i" style="left:704.78px;top:461.14px;" width="11.44" height="11.44" viewBox="0 0 13 13"><path d="M12 0.8 L12.4 1.4 L6.6 7.4 L5.6 6.4 Z" fill="#b4b4b4"/><circle cx="3.8" cy="9.2" r="3.2" fill="#b4b4b4"/></svg><svg class="i" style="left:704.78px;top:481.12px;" width="11.44" height="11.44" viewBox="0 0 13 13"><path d="M11.6 0.8 C10.6 5.4 8 10.4 3.4 11.8 C1.2 12.2 0.2 10 1.4 8 C3.6 4.4 8 2.4 11.6 0.8 Z" fill="#a4a4a4"/></svg><svg class="i" style="left:704.78px;top:501.09999999999997px;" width="11.44" height="11.44" viewBox="0 0 13 13"><path d="M10.8 0.6 L12.4 2.2 L7.4 7.2 L5.8 5.6 Z" fill="#b4b4b4"/><path d="M5.2 6 L7 7.8 L3.4 12.2 L0.6 12.6 L1 9.6 Z" fill="#b4b4b4"/><path d="M1.6 11.6 L4.6 8.4" stroke="#4b4b4b" stroke-width="0.5"/></svg><svg class="i" style="left:704.78px;top:521.0799999999999px;" width="11.44" height="11.44" viewBox="0 0 13 13"><path d="M5 4.6 L6.4 7.8 L9.8 8.2 L7.2 10.4 L8 13 L5 11.4 L2 13 L2.8 10.4 L0.2 8.2 L3.6 7.8 Z" fill="#b4b4b4" transform="translate(0 -1)"/><circle cx="10" cy="3.4" r="1.2" fill="#b4b4b4"/><circle cx="12" cy="0.9" r="0.8" fill="#b4b4b4"/></svg><svg class="i" style="left:704.78px;top:541.06px;" width="11.44" height="11.44" viewBox="0 0 13 13"><path d="M9.6 0.8 L12.2 3.4 L6 10 L3.2 7.2 Z" fill="none" stroke="#b4b4b4" stroke-width="1"/><path d="M3 7.6 L5.6 10.2 L1.4 12.2 L0.8 11.6 Z" fill="none" stroke="#b4b4b4" stroke-width="0.9"/></svg><svg class="i" style="left:0px;top:0px;" width="975" height="634" viewBox="0 0 975 634"><defs><filter id="bl0" x="-50%" y="-50%" width="200%" height="200%"><feGaussianBlur stdDeviation="0.45"/></filter><filter id="bl1" x="-20%" y="-50%" width="140%" height="200%"><feGaussianBlur stdDeviation="0.8"/></filter><filter id="bl2" x="-20%" y="-50%" width="140%" height="200%"><feGaussianBlur stdDeviation="1.1"/></filter><filter id="rg" x="-5%" y="-20%" width="110%" height="140%"><feTurbulence type="fractalNoise" baseFrequency="0.9" numOctaves="2" seed="3" result="n"/><feDisplacementMap in="SourceGraphic" in2="n" scale="2.2"/></filter><filter id="rg2" x="-5%" y="-20%" width="110%" height="140%"><feTurbulence type="fractalNoise" baseFrequency="0.7" numOctaves="2" seed="5" result="n"/><feDisplacementMap in="SourceGraphic" in2="n" scale="3"/></filter></defs><g transform="translate(724 319.10) scale(0.98)"><rect x="0" y="5.6" width="6" height="3.6" fill="#d9a66a"/><rect x="5.4" y="5" width="4.4" height="4.8" fill="#9a9a9a"/><rect x="6.6" y="5" width="1" height="4.8" fill="#d8d8d8"/><path d="M9.8 5 C13 4.6 16 6 18.6 7.4 C16 8.8 13 10.2 9.8 9.8 Z" fill="#f08a3a"/><path d="M9.8 5 C12 5 14 5.8 15.6 6.6 L9.8 7.2 Z" fill="#ffb878"/></g><circle cx="750.6" cy="326.6" r="3.5" fill="#fff"/><g transform="translate(724 335.95) scale(0.98)"><rect x="0" y="5" width="7" height="5" rx="1" fill="#d8401a"/><rect x="6" y="4.6" width="4.4" height="5.8" fill="#c9a24a"/><rect x="7.4" y="4.6" width="1.2" height="5.8" fill="#f4dc90"/><path d="M10.4 5 L17.6 1.6 C19 5 19 10 17.6 13.4 L10.4 10 Z" fill="#f07a18"/><path d="M10.4 5 L17.6 1.6 C18 3 18.2 4.4 18.2 5.6 Z" fill="#ffa848"/></g><circle cx="750.6" cy="343.45" r="2.5" fill="#fff" filter="url(#bl0)"/><g transform="translate(724 352.80) scale(0.98)"><rect x="0" y="5.8" width="6.4" height="3.4" fill="#e0a85e"/><rect x="5.6" y="5.2" width="3.6" height="4.6" fill="#9c9c9c"/><rect x="6.6" y="5.2" width="0.9" height="4.6" fill="#dadada"/><ellipse cx="13.6" cy="7.5" rx="5" ry="4.4" fill="#e8b488"/><ellipse cx="12.8" cy="6.4" rx="3" ry="2.4" fill="#f8d4b0"/></g><circle cx="750.6" cy="360.3" r="0.9" fill="#ddd"/><g transform="translate(724 369.65) scale(0.98)"><rect x="0" y="3.4" width="9" height="8.2" fill="#d62a2a"/><rect x="0" y="5.2" width="9" height="1.4" fill="#f05a50"/><path d="M9 3.4 L18.6 7.5 L9 11.6 Z" fill="#e8b070"/><path d="M15.6 6.2 L18.6 7.5 L15.6 8.8 Z" fill="#c0602a"/></g><rect x="750.0" y="374.34999999999997" width="1.2" height="5.6" fill="#fff"/><g transform="translate(724 386.50) scale(0.98)"><rect x="0" y="4.8" width="6" height="5.4" rx="1.4" fill="#c8301a"/><rect x="1" y="5.6" width="4" height="1.4" fill="#f0704a"/><path d="M5.6 3.4 C10 2.6 15 5 19 7.5 C15 10 10 12.4 5.6 11.6 Z" fill="#d8b048"/><path d="M5.6 3.4 C10 3.4 14 5.4 17 7 L6 7.4 Z" fill="#f6e08a"/><circle cx="10" cy="7.5" r="1" fill="#7a5a18"/></g><circle cx="750.6" cy="394.0" r="3.5" fill="#fff"/><g transform="translate(724 403.35) scale(0.98)"><rect x="0" y="5.8" width="5" height="3.4" fill="#e06a20"/><rect x="4.4" y="5.2" width="4.4" height="4.6" fill="#d8b050"/><rect x="5.6" y="5.2" width="1" height="4.6" fill="#fff0a8"/><path d="M8.8 5.2 C12 4.8 15 6.2 17.6 7.5 C15 8.8 12 10.2 8.8 9.8 Z" fill="#e8601a"/><path d="M8.8 5.2 C11 5.2 13 6 14.6 6.8 L8.8 7.2 Z" fill="#ff9048"/></g><path d="M747.6 409.25 C748.6 407.25 753.2 407.45000000000005 753.6 409.85 C754.0 412.45000000000005 751.6 414.25 749.4 413.85 C747.6 413.25 747.2 411.25 747.6 409.25 Z" fill="#fff"/><g transform="translate(724 420.20) scale(0.98)"><rect x="0" y="6.4" width="7" height="2.4" fill="#7a3a20"/><rect x="6.4" y="5.2" width="4" height="4.8" fill="#d8c8a0"/><rect x="7.6" y="5.2" width="1" height="4.8" fill="#fff"/><ellipse cx="14.6" cy="7.5" rx="4.6" ry="3.8" fill="#f07a18"/><ellipse cx="14" cy="6.4" rx="2.8" ry="2" fill="#ffa850"/></g><path d="M750.6 424.7 V430.7" stroke="#888" stroke-width="0.7" stroke-dasharray="1.2 0.8"/><g transform="translate(724 437.05) scale(0.98)"><rect x="0" y="6.2" width="5.4" height="2.6" fill="#d8a040"/><rect x="5" y="5.8" width="4" height="3.4" fill="#9a7a5a"/><rect x="6" y="5.8" width="0.9" height="3.4" fill="#e0c8a8"/><path d="M9 6 C12 5.8 15 6.8 17.6 7.5 C15 8.4 12 9.2 9 9 Z" fill="#c04a20"/></g><circle cx="750.6" cy="444.55" r="2.8" fill="#fff"/><g transform="translate(724 453.90) scale(0.98)"><rect x="0" y="9" width="6" height="3.4" fill="#b05858"/><rect x="5.4" y="8.6" width="2.4" height="4.2" fill="#c0c0c0"/><path d="M7.8 10.6 H10.6 V1.2 H12.6" fill="none" stroke="#9a9a9a" stroke-width="1.1"/><rect x="12.4" y="0.8" width="6" height="13.4" rx="1.4" fill="#f07a18"/><rect x="13.4" y="0.8" width="1.6" height="13.4" fill="#ffa448"/></g><path d="M749.0 459.4 L750.8000000000001 460.79999999999995 L752.8000000000001 461.2 L751.2 462.2 L751.4 463.79999999999995 L750.2 462.2 L748.6 462.0 L749.8000000000001 461.2 Z" fill="#e8e8e8"/><g transform="translate(724 470.75) scale(0.98)"><rect x="0" y="6" width="5" height="3" fill="#d8a060"/><rect x="4.4" y="5.2" width="3.6" height="4.6" fill="#8a4a2a"/><path d="M8 4.6 L12 2.4 L18.6 10.8 L8 10.4 Z" fill="#f07a18"/><path d="M8 4.6 L12 2.4 L15 6.2 Z" fill="#ffa850"/></g><path d="M747.6 476.65 C748.6 474.65 753.2 474.85 753.6 477.25 C754.0 479.85 751.6 481.65 749.4 481.25 C747.6 480.65 747.2 478.65 747.6 476.65 Z" fill="#fff"/><g transform="translate(724 487.60) scale(0.98)"><rect x="0" y="6" width="6" height="3" fill="#e8b060"/><rect x="5.4" y="5.4" width="4" height="4.2" fill="#a8a8a8"/><rect x="6.6" y="5.4" width="0.9" height="4.2" fill="#e4e4e4"/><path d="M9.4 5.2 L15 2.6 C18.6 4 18.6 11 15 12.4 L9.4 9.8 Z" fill="#7a4030"/><path d="M9.4 5.2 L15 2.6 C16.6 3.2 17.4 4.6 17.6 6 Z" fill="#9a5a48"/></g><circle cx="750.6" cy="495.1" r="2.3" fill="#f4f4f4"/><g transform="translate(724 504.45) scale(0.98)"><path d="M0 0.6 H8 L14 5.4 V9.6 L8 14.4 H0 Z" fill="#e02a1a"/><path d="M0 0.6 H8 L11 3 L0 6 Z" fill="#ff5a40"/><path d="M0 10 L10 12.8 L8 14.4 H0 Z" fill="#b01810"/><rect x="13.6" y="4.6" width="4.4" height="5.8" rx="1" fill="#f0f0f0"/><rect x="9" y="10.4" width="2" height="2" fill="#c040c0"/></g><rect x="747.4" y="508.75" width="6.4" height="6.4" fill="none" stroke="#b0b0b0" stroke-width="0.9"/><g transform="translate(724 521.30) scale(0.98)"><path d="M0 0.6 H8 L14 5.4 V9.6 L8 14.4 H0 Z" fill="#c8c8c0"/><path d="M0 0.6 H8 L11 3 L0 8 Z" fill="#f0f0ec"/><path d="M8 0.6 L14 5.4 V9.6 L8 14.4 Z" fill="#d8c060"/><rect x="13.6" y="4.6" width="4.8" height="5.8" rx="1" fill="#e8d070"/><path d="M0 12.8 H9 L8 14.4 H0 Z" fill="#5aa858"/></g><rect x="747.0" y="525.1999999999999" width="7.2" height="7.2" fill="#fff"/><g transform="translate(724 538.15) scale(0.98)"><rect x="0" y="5.4" width="6" height="4.2" rx="1" fill="#d8501a"/><rect x="5.4" y="5" width="4.6" height="5" fill="#d8b050"/><rect x="6.8" y="5" width="1" height="5" fill="#fff0a8"/><rect x="10" y="6" width="9" height="3" fill="#e8701a"/><rect x="10" y="6" width="9" height="1" fill="#ffa048"/></g><circle cx="750.6" cy="545.65" r="3" fill="#fff"/></svg><div class="t n" style="left:759px;top:322.7px;font-size:7.6px;color:#d2d2d2;width:64.4px;line-height:11px;overflow:hidden;">Brush</div><div class="t n" style="left:759px;top:339.55px;font-size:7.6px;color:#bdbdbd;width:64.4px;line-height:11px;overflow:hidden;">Classic blend brush</div><div class="t n" style="left:759px;top:356.4px;font-size:7.6px;color:#bdbdbd;width:64.4px;line-height:11px;overflow:hidden;">Airbrush</div><div class="t n" style="left:759px;top:373.25px;font-size:7.6px;color:#bdbdbd;width:64.4px;line-height:11px;overflow:hidden;">Dynamic pencil</div><div class="t n" style="left:759px;top:390.09999999999997px;font-size:7.6px;color:#bdbdbd;width:64.4px;line-height:11px;overflow:hidden;">Clean art</div><div class="t n" style="left:759px;top:406.95px;font-size:7.6px;color:#bdbdbd;width:64.4px;line-height:11px;overflow:hidden;">Big watercolor</div><div class="t n" style="left:759px;top:423.8px;font-size:7.6px;color:#bdbdbd;width:64.4px;line-height:11px;overflow:hidden;">Dirty impasto oil</div><div class="t n" style="left:759px;top:440.65000000000003px;font-size:7.6px;color:#bdbdbd;width:64.4px;line-height:11px;overflow:hidden;">Round camel hair</div><div class="t n" style="left:759px;top:457.5px;font-size:7.6px;color:#bdbdbd;width:64.4px;line-height:11px;overflow:hidden;">Little texture</div><div class="t n" style="left:759px;top:474.34999999999997px;font-size:7.6px;color:#bdbdbd;width:64.4px;line-height:11px;overflow:hidden;">Block brush</div><div class="t n" style="left:759px;top:491.2px;font-size:7.6px;color:#bdbdbd;width:64.4px;line-height:11px;overflow:hidden;">Classic pattern</div><div class="t n" style="left:759px;top:508.05px;font-size:7.6px;color:#bdbdbd;width:64.4px;line-height:11px;overflow:hidden;">Demo 3D plaster</div><div class="t n" style="left:759px;top:524.9000000000001px;font-size:7.6px;color:#bdbdbd;width:64.4px;line-height:11px;overflow:hidden;">Demo fast BG</div><div class="t n" style="left:759px;top:541.7500000000001px;font-size:7.6px;color:#bdbdbd;width:64.4px;line-height:11px;overflow:hidden;">Demo with pic</div><svg class="i" style="left:0px;top:0px;clip-path:inset(319px 158.4px 81px 724px);" width="975" height="634" viewBox="0 0 975 634"><g><path transform="translate(0 326.6)" d="M768 -2.8 C770 -4 773 -4.7 776 -4.5 C783 -4.1 790 -2.2 797 -0.6 C800 0.1 803 0.9 806.4 1.5 C803 2.6 800 3.7 796 4.3 C791 4.9 786 4.1 781 2.5 C776 0.7 772 -1.6 768 -2.8 Z" fill="#fff"/><path d="M766 343.84999999999997 C772 339.05 782.0 339.05 786.0 341.95 C791.0 343.84999999999997 798 345.25 806 345.05 C798 346.84999999999997 791.0 346.84999999999997 786.0 345.15000000000003 C782.0 344.05 772 343.84999999999997 766 343.84999999999997 Z" fill="#fff" filter="url(#bl1)" opacity="0.9"/><path d="M764 360.7 C770 356.5 781.0 356.5 785.0 359.00000000000006 C790.0 360.7 798 361.90000000000003 806 361.90000000000003 C798 363.3 790.0 363.3 785.0 361.8 C781.0 360.70000000000005 770 360.5 764 360.7 Z" fill="#fff" filter="url(#bl2)" opacity="0.95"/><path d="M764 377.75 C774 375.75 784 376.15 792 377.75 S802 378.34999999999997 806 377.95" stroke="#888" stroke-width="0.7" fill="none"/><path d="M768 394.4 C774 391.1 784.0 391.1 788.0 393.15000000000003 C793.0 395.2 800 395.6 808 395.6 C800 396.2 793.0 396.2 788.0 395.05 C784.0 393.5 774 393.29999999999995 768 394.4 Z" fill="#e8e8e8" /><path d="M764 411.25 C770 407.05 782.0 407.05 786.0 409.55000000000007 C791.0 411.75 800 412.45000000000005 808 412.45000000000005 C800 413.35 791.0 413.35 786.0 412.35 C782.0 411.25000000000006 770 411.05 764 411.25 Z" fill="#fff" /><path d="M762 428.09999999999997 C768 423.7 782.0 423.7 786.0 426.3 C791.0 428.09999999999997 802 429.3 810 429.3 C802 430.7 791.0 430.7 786.0 429.3 C782.0 428.3 768 428.09999999999997 762 428.09999999999997 Z" fill="#fff" filter="url(#rg)"/><path d="M762 444.95 C768 441.85 782.0 441.85 786.0 443.70000000000005 C791.0 445.45 802 445.95000000000005 810 446.15000000000003 C802 446.65000000000003 791.0 446.65000000000003 786.0 445.6 C782.0 444.25 768 444.04999999999995 762 444.95 Z" fill="#f0f0f0" /><path d="M774 461.79999999999995 C780 459.2 782.0 459.2 786.0 460.5 C791.0 461.59999999999997 790 462.2 798 463.0 C790 462.99999999999994 791.0 462.99999999999994 786.0 462.5 C782.0 461.8 780 461.59999999999997 774 461.79999999999995 Z" fill="#fff" filter="url(#rg)"/><path d="M762 478.65 C768 473.45 782.0 473.45 786.0 476.55 C791.0 478.95 802 480.05 810 479.85 C802 481.34999999999997 791.0 481.34999999999997 786.0 480.15000000000003 C782.0 479.25000000000006 768 479.05 762 478.65 Z" fill="#fff" /><path d="M772 491.90000000000003h10v2.6h-10z" fill="#fff" filter="url(#rg)"/><path d="M778 495.5 C784 493.00000000000006 786.0 493.00000000000006 790.0 494.25000000000006 C795.0 495.3 794 495.90000000000003 802 496.70000000000005 C794 496.7 795.0 496.7 790.0 496.15000000000003 C786.0 495.40000000000003 784 495.2 778 495.5 Z" fill="#ddd" filter="url(#rg)"/><path d="M764 512.35 C770 506.95 782.0 506.95 786.0 510.05 C791.0 511.75 800 513.5500000000001 808 513.55 C800 515.5500000000001 791.0 515.5500000000001 786.0 514.0500000000001 C782.0 513.5500000000001 770 513.35 764 512.35 Z" fill="#cfcfcf" filter="url(#rg)"/><rect x="768" y="522.4" width="3.6" height="1.4" fill="#8ac020"/><path d="M774 526.1999999999999 l4 -1.4 l5 1 l4 -0.6 v2.2 l-5 0.4 l-4 -0.4 l-4 0.6 Z" fill="#48c838"/><path d="M786 527.0 l6 -0.6 l5 0.6 l4 -0.6 v1.8 l-4 0.6 l-5 -0.4 l-6 0.6 Z" fill="#20b8d8"/><rect x="760" y="540.85" width="50" height="10" fill="#cda88a" filter="url(#rg2)"/><rect x="775.8" y="541.8" width="2.6" height="0.9" fill="#e8c8a0"/><rect x="778.0" y="540.9" width="2.2" height="0.9" fill="#f4d8b8"/><rect x="780.7" y="542.8" width="2.3" height="0.9" fill="#e8c8a0"/><rect x="808.3" y="546.8" width="2.4" height="0.9" fill="#f4d8b8"/><rect x="761.6" y="542.5" width="2.3" height="1.0" fill="#f4d8b8"/><rect x="766.5" y="541.5" width="1.7" height="2.3" fill="#8aa6c4"/><rect x="764.4" y="546.2" width="1.5" height="1.0" fill="#e8c8a0"/><rect x="788.3" y="546.7" width="2.2" height="1.8" fill="#c8b8a8"/><rect x="783.2" y="549.9" width="1.9" height="1.2" fill="#8aa6c4"/><rect x="795.3" y="542.8" width="2.4" height="1.7" fill="#c8b8a8"/><rect x="796.9" y="543.2" width="3.4" height="1.0" fill="#f4d8b8"/><rect x="767.6" y="543.8" width="3.2" height="1.6" fill="#e8c8a0"/><rect x="798.8" y="546.2" width="3.1" height="1.4" fill="#c8b8a8"/><rect x="789.9" y="546.3" width="2.1" height="2.3" fill="#d07838"/><rect x="783.7" y="547.2" width="1.1" height="2.1" fill="#e8a870"/><rect x="773.8" y="544.3" width="2.6" height="0.8" fill="#e8a870"/><rect x="777.5" y="546.6" width="2.2" height="1.2" fill="#d07838"/><rect x="765.7" y="542.8" width="1.9" height="2.4" fill="#e8c8a0"/><rect x="767.7" y="544.4" width="1.7" height="1.0" fill="#f4d8b8"/><rect x="803.9" y="543.1" width="2.0" height="1.4" fill="#f4d8b8"/><rect x="808.8" y="541.8" width="1.4" height="1.2" fill="#fff"/><rect x="759.6" y="548.9" width="1.4" height="1.3" fill="#8aa6c4"/><rect x="780.8" y="544.1" width="2.4" height="2.5" fill="#f0a060"/><rect x="782.7" y="549.3" width="3.3" height="2.0" fill="#f4d8b8"/><rect x="779.7" y="544.3" width="2.2" height="1.5" fill="#fff"/><rect x="762.5" y="542.4" width="1.4" height="1.4" fill="#f0a060"/><rect x="764.3" y="546.1" width="2.3" height="2.5" fill="#f0a060"/><rect x="762.7" y="542.4" width="1.9" height="1.9" fill="#c8b8a8"/><rect x="790.3" y="545.2" width="1.3" height="1.7" fill="#e8a870"/><rect x="784.0" y="543.5" width="1.3" height="2.1" fill="#d07838"/><rect x="783.9" y="547.4" width="2.2" height="1.2" fill="#c8b8a8"/><rect x="766.6" y="545.9" width="1.1" height="1.8" fill="#e8c8a0"/><rect x="795.2" y="543.0" width="1.9" height="1.1" fill="#fff"/><rect x="786.7" y="548.4" width="1.8" height="1.2" fill="#fff"/><rect x="800.9" y="548.8" width="2.8" height="1.2" fill="#e8a870"/><rect x="777.5" y="540.6" width="1.1" height="1.3" fill="#d07838"/><rect x="769.1" y="546.5" width="1.8" height="2.3" fill="#c8b8a8"/><rect x="808.7" y="544.0" width="1.5" height="1.2" fill="#fff"/><rect x="776.6" y="545.3" width="3.4" height="1.9" fill="#f0a060"/><rect x="783.9" y="547.0" width="2.9" height="1.0" fill="#e8c8a0"/><rect x="806.3" y="548.4" width="2.8" height="1.7" fill="#8aa6c4"/><rect x="781.6" y="546.9" width="1.2" height="2.5" fill="#f4d8b8"/><rect x="783.1" y="548.0" width="1.2" height="1.1" fill="#8aa6c4"/><rect x="760.4" y="546.4" width="2.1" height="2.0" fill="#e8a870"/><rect x="793.2" y="543.9" width="2.3" height="1.0" fill="#f0a060"/><rect x="800.6" y="547.8" width="1.2" height="2.1" fill="#8aa6c4"/><rect x="781.6" y="549.3" width="3.0" height="1.2" fill="#d07838"/><rect x="770.1" y="545.5" width="2.8" height="1.4" fill="#f4d8b8"/><rect x="802.4" y="540.9" width="2.8" height="2.4" fill="#f4d8b8"/><rect x="802.0" y="549.4" width="1.3" height="1.1" fill="#f0a060"/><rect x="804.4" y="548.3" width="2.5" height="2.2" fill="#8aa6c4"/><rect x="768.0" y="545.2" width="2.7" height="1.8" fill="#c8b8a8"/><rect x="794.5" y="545.8" width="2.2" height="2.2" fill="#f0a060"/><rect x="771.9" y="543.1" width="2.9" height="1.7" fill="#f0a060"/><rect x="798.5" y="549.7" width="2.1" height="1.9" fill="#fff"/><rect x="795.0" y="545.0" width="2.3" height="1.7" fill="#fff"/><rect x="795.4" y="549.4" width="3.3" height="1.3" fill="#fff"/><rect x="802.7" y="541.7" width="1.3" height="1.6" fill="#e8c8a0"/><rect x="793.9" y="544.7" width="1.5" height="1.3" fill="#e8c8a0"/><rect x="805.6" y="541.9" width="2.7" height="2.0" fill="#8aa6c4"/><rect x="772.2" y="541.7" width="2.1" height="2.1" fill="#e8c8a0"/><rect x="779.7" y="545.3" width="3.4" height="2.3" fill="#8aa6c4"/><rect x="795.7" y="550.6" width="2.0" height="1.6" fill="#c8b8a8"/><rect x="775.6" y="547.8" width="1.0" height="1.8" fill="#e8a870"/><rect x="795.6" y="544.2" width="2.2" height="1.3" fill="#e8c8a0"/><rect x="764.9" y="549.8" width="1.5" height="2.4" fill="#e8c8a0"/><rect x="772.8" y="540.7" width="2.9" height="1.3" fill="#8aa6c4"/><rect x="801.6" y="549.1" width="2.6" height="2.5" fill="#f4d8b8"/><rect x="766.8" y="549.8" width="2.4" height="2.1" fill="#e8c8a0"/><rect x="773.5" y="548.6" width="1.4" height="2.4" fill="#d07838"/></g></svg><svg class="i" style="left:725.6px;top:560.8px;" width="8.6" height="9.4" viewBox="0 0 8.6 9.4"><path d="M0.2 0.2 H8.4 V9.2 H3.4 L0.2 6 Z" fill="#b0b0b0"/><path d="M0.2 6 H3.4 V9.2" fill="#7a7a7a"/></svg><svg class="i" style="left:742px;top:560.4px;" width="6.8" height="10" viewBox="0 0 6.8 10"><rect x="0.4" y="2" width="6" height="7.8" rx="0.6" fill="#9a9a9a"/><rect x="0" y="1" width="6.8" height="1" fill="#b0b0b0"/><rect x="2.2" y="0" width="2.4" height="1.2" fill="#b0b0b0"/><path d="M2.2 3.4 V8.6 M4.6 3.4 V8.6" stroke="#6a6a6a" stroke-width="0.6"/></svg><svg class="i" style="left:754.6px;top:559.8px;" width="11.4" height="11.4" viewBox="0 0 16 16"><g fill="#b4b4b4"><rect x="6.5" y="0.2" width="3" height="4" rx="0.5" transform="rotate(0 8 8)"/><rect x="6.5" y="0.2" width="3" height="4" rx="0.5" transform="rotate(45 8 8)"/><rect x="6.5" y="0.2" width="3" height="4" rx="0.5" transform="rotate(90 8 8)"/><rect x="6.5" y="0.2" width="3" height="4" rx="0.5" transform="rotate(135 8 8)"/><rect x="6.5" y="0.2" width="3" height="4" rx="0.5" transform="rotate(180 8 8)"/><rect x="6.5" y="0.2" width="3" height="4" rx="0.5" transform="rotate(225 8 8)"/><rect x="6.5" y="0.2" width="3" height="4" rx="0.5" transform="rotate(270 8 8)"/><rect x="6.5" y="0.2" width="3" height="4" rx="0.5" transform="rotate(315 8 8)"/><circle cx="8" cy="8" r="5.9"/></g><circle cx="8" cy="8" r="3.3" fill="#3a3a3a"/><circle cx="8" cy="8" r="1.5" fill="#b4b4b4"/></svg><svg class="i" style="left:793.4px;top:560.6px;" width="10.6" height="10" viewBox="0 0 10.6 10"><rect x="0.5" y="0.5" width="9.6" height="9" fill="none" stroke="#b0b0b0" stroke-width="0.9"/><path d="M0.5 3 H10.1 M2.2 1.8 H3.4 M4.6 1.8 H5.8" stroke="#b0b0b0" stroke-width="0.8"/><rect x="2" y="4.6" width="6.6" height="3.6" fill="#6e6e6e"/></svg><div style="left:806.8px;top:559.4px;width:13px;height:12.4px;background:#3d3d3d;"></div><svg class="i" style="left:808px;top:560.6px;" width="10.6" height="10" viewBox="0 0 10.6 10"><path d="M0.2 1.4 H2.2 M3.6 1.4 H10.4 M0.2 5 H2.2 M3.6 5 H10.4 M0.2 8.6 H2.2 M3.6 8.6 H10.4" stroke="#f5b078" stroke-width="1.8"/></svg><div style="left:696.4px;top:582.8px;width:134.2px;height:14.6px;background:#343636;"></div><div class="t" style="left:704.4px;top:585.5999999999999px;font-size:7.25px;color:#c4c4c4;font-weight:700;line-height:10px;">图层</div><svg class="i" style="left:794.4px;top:586.4499999999999px;" width="7.5" height="7.5" viewBox="0 0 16 16"><g fill="#b9b9b9"><rect x="6.5" y="0.2" width="3" height="4" rx="0.5" transform="rotate(0 8 8)"/><rect x="6.5" y="0.2" width="3" height="4" rx="0.5" transform="rotate(45 8 8)"/><rect x="6.5" y="0.2" width="3" height="4" rx="0.5" transform="rotate(90 8 8)"/><rect x="6.5" y="0.2" width="3" height="4" rx="0.5" transform="rotate(135 8 8)"/><rect x="6.5" y="0.2" width="3" height="4" rx="0.5" transform="rotate(180 8 8)"/><rect x="6.5" y="0.2" width="3" height="4" rx="0.5" transform="rotate(225 8 8)"/><rect x="6.5" y="0.2" width="3" height="4" rx="0.5" transform="rotate(270 8 8)"/><rect x="6.5" y="0.2" width="3" height="4" rx="0.5" transform="rotate(315 8 8)"/><circle cx="8" cy="8" r="5.9"/></g><circle cx="8" cy="8" r="3.3" fill="#3a3a3a"/><circle cx="8" cy="8" r="1.5" fill="#b9b9b9"/></svg><div style="left:805.6999999999999px;top:591.8999999999999px;width:6.8px;height:2px;background:#b4b4b4;"></div><svg class="i" style="left:816.4px;top:586.4499999999999px;" width="7.5" height="7.5" viewBox="0 0 16 16"><rect x="0.8" y="0.8" width="14.4" height="14.4" fill="#a4a4a4" stroke="#c4c4c4" stroke-width="1.6"/><path d="M3.6 3.6 L12.4 12.4 M12.4 3.6 L3.6 12.4" stroke="#2e2e2e" stroke-width="2.3"/></svg><div style="left:696.4px;top:597.4px;width:134.2px;height:21.6px;background:#4b4b4b;"></div><div style="left:702px;top:604px;width:69.8px;height:11.8px;background:#3a3a3a;border:1px solid #2c2c2c;border-radius:2px;"></div><div class="t" style="left:707.2px;top:605px;font-size:7.4px;color:#d4d4d4;font-weight:700;line-height:10px;">正常</div><svg class="i" style="left:763.4px;top:606.4px;" width="4.6" height="7" viewBox="0 0 4.6 7"><path d="M2.3 0.2 L4.4 2.8 H0.2 Z M2.3 6.8 L4.4 4.2 H0.2 Z" fill="#c8c8c8"/></svg><div class="t" style="left:781px;top:604.4px;font-size:5.8px;color:#cfcfcf;font-weight:700;line-height:8px;">不透明度</div><div class="t" style="left:800px;top:604.4px;font-size:5.8px;color:#cfcfcf;width:18px;text-align:right;line-height:8px;">100</div><div style="left:780.6px;top:612.2px;width:42.2px;height:4.8px;background:#555;border-radius:2.4px;"></div><div style="left:780.6px;top:612.2px;width:42.2px;height:4.8px;background:linear-gradient(180deg,rgba(255,255,255,0.16),rgba(255,255,255,0) 45%,rgba(0,0,0,0.1)),linear-gradient(90deg,#bf7653 0%,#e09c72 55%,#ffc892 100%);border-radius:2.4px;"></div>
<!-- right2 -->
<div style="left:832px;top:112.5px;width:117px;height:506.5px;background:#484848;"></div><div style="left:832.4px;top:112.5px;width:116.6px;height:0.9000000000000057px;background:#363838;"></div><div style="left:832.4px;top:112.2px;width:116.6px;height:0.8px;background:#464848;"></div><div style="left:832.4px;top:331.8px;width:116.6px;height:6.399999999999977px;background:#363838;"></div><div style="left:832.4px;top:337.0px;width:116.6px;height:0.8px;background:#464848;"></div><div style="left:832.4px;top:483.2px;width:116.6px;height:5.600000000000023px;background:#363838;"></div><div style="left:832.4px;top:487.6px;width:116.6px;height:0.8px;background:#464848;"></div><div style="left:832.4px;top:113.4px;width:116.6px;height:80px;background:#4b4b4b;"></div><svg class="i" style="left:930.2px;top:115px;" width="7.6" height="7.6" viewBox="0 0 16 16"><g fill="#b9b9b9"><rect x="6.5" y="0.2" width="3" height="4" rx="0.5" transform="rotate(0 8 8)"/><rect x="6.5" y="0.2" width="3" height="4" rx="0.5" transform="rotate(45 8 8)"/><rect x="6.5" y="0.2" width="3" height="4" rx="0.5" transform="rotate(90 8 8)"/><rect x="6.5" y="0.2" width="3" height="4" rx="0.5" transform="rotate(135 8 8)"/><rect x="6.5" y="0.2" width="3" height="4" rx="0.5" transform="rotate(180 8 8)"/><rect x="6.5" y="0.2" width="3" height="4" rx="0.5" transform="rotate(225 8 8)"/><rect x="6.5" y="0.2" width="3" height="4" rx="0.5" transform="rotate(270 8 8)"/><rect x="6.5" y="0.2" width="3" height="4" rx="0.5" transform="rotate(315 8 8)"/><circle cx="8" cy="8" r="5.9"/></g><circle cx="8" cy="8" r="3.3" fill="#3a3a3a"/><circle cx="8" cy="8" r="1.5" fill="#b9b9b9"/></svg><svg class="i" style="left:940px;top:115.2px;" width="7.4" height="7.4" viewBox="0 0 16 16"><rect x="0.8" y="0.8" width="14.4" height="14.4" fill="#a4a4a4" stroke="#c4c4c4" stroke-width="1.6"/><path d="M3.6 3.6 L12.4 12.4 M12.4 3.6 L3.6 12.4" stroke="#2e2e2e" stroke-width="2.3"/></svg><div style="left:833.8px;top:124.5px;width:112.8px;height:44.2px;background:#363636;"></div><div style="left:924.7px;top:124.5px;width:21.9px;height:21.8px;background:#4b4b4b;"></div><svg class="i" style="left:838.0px;top:128.9px;" width="13" height="13" viewBox="0 0 13 13"><path d="M12.2 0.8 L7.2 5.8" stroke="#f5b078" stroke-width="1.2"/><path d="M5.9 7.1 L1.8 11.2" stroke="#f5b078" stroke-width="2.9" stroke-linecap="round"/><path d="M4.2 4.2 L10.6 10.6" stroke="#f5b078" stroke-width="3" stroke-linecap="round"/><circle cx="3.3" cy="3.3" r="2.9" fill="#f5b078"/><path d="M3.3 3.3 L-0.8 1.6 L1.6 -0.8 Z" fill="#363636"/><circle cx="10.5" cy="10.5" r="0.65" fill="#363636"/></svg><svg class="i" style="left:861.2px;top:128.9px;" width="13" height="13" viewBox="0 0 13 13"><rect x="5.5" y="0.3" width="2" height="2.2" rx="0.6" transform="rotate(0 6.5 6.5)" fill="#b98a5e"/><rect x="5.5" y="0.3" width="2" height="2.2" rx="0.6" transform="rotate(36 6.5 6.5)" fill="#b98a5e"/><rect x="5.5" y="0.3" width="2" height="2.2" rx="0.6" transform="rotate(72 6.5 6.5)" fill="#b98a5e"/><rect x="5.5" y="0.3" width="2" height="2.2" rx="0.6" transform="rotate(108 6.5 6.5)" fill="#b98a5e"/><rect x="5.5" y="0.3" width="2" height="2.2" rx="0.6" transform="rotate(144 6.5 6.5)" fill="#b98a5e"/><rect x="5.5" y="0.3" width="2" height="2.2" rx="0.6" transform="rotate(180 6.5 6.5)" fill="#b98a5e"/><rect x="5.5" y="0.3" width="2" height="2.2" rx="0.6" transform="rotate(216 6.5 6.5)" fill="#b98a5e"/><rect x="5.5" y="0.3" width="2" height="2.2" rx="0.6" transform="rotate(252 6.5 6.5)" fill="#b98a5e"/><rect x="5.5" y="0.3" width="2" height="2.2" rx="0.6" transform="rotate(288 6.5 6.5)" fill="#b98a5e"/><rect x="5.5" y="0.3" width="2" height="2.2" rx="0.6" transform="rotate(324 6.5 6.5)" fill="#b98a5e"/><circle cx="6.5" cy="6.5" r="4.5" fill="none" stroke="#b98a5e" stroke-width="1"/><path d="M12 0.4 Q11.4 4 5.4 10 L3.6 8.2 Q8.4 2 12 0.4 Z" fill="#f5b078" stroke="#363636" stroke-width="0.4"/><path d="M3.2 8.8 L4.6 10.2 C4 11.6 2.4 12.2 0.8 12.2 C1.8 11.2 1.8 9.8 3.2 8.8 Z" fill="#f5b078"/></svg><svg class="i" style="left:883.6px;top:128.9px;" width="13" height="13" viewBox="0 0 13 13"><path d="M2.2 7 H10.8 L10 12.6 H3 Z" fill="#f5b078"/><path d="M1 1.6 L4.4 6.6 M8.4 0.8 L7.4 6.6" stroke="#f5b078" stroke-width="1.7" stroke-linecap="round"/><path d="M11.6 1.6 L9.4 6.6" stroke="#f5b078" stroke-width="1.3"/><path d="M10.6 1 L12.4 1.8 L12 3.6 L10.4 3 Z" fill="#f5b078"/></svg><svg class="i" style="left:906.6px;top:128.9px;" width="13" height="13" viewBox="0 0 13 13"><path d="M6.5 1 L12.4 4.6 L6.5 8.2 L0.6 4.6 Z" fill="#f5b078"/><path d="M1 7.2 L6.5 10.6 L12 7.2" fill="none" stroke="#f5b078" stroke-width="1.5"/></svg><div style="left:929.4px;top:129px;width:13.4px;height:13px;background:#5d5d5d;"></div><svg class="i" style="left:929.4px;top:129px;" width="13.4" height="13" viewBox="0 0 13.4 13"><path d="M1.2 12 C6 9.6 10 5.4 12.2 1 L12.2 12 Z" fill="#a2a2a2"/></svg><svg class="i" style="left:838.0px;top:151.5px;" width="13" height="13" viewBox="0 0 13 13"><circle cx="6.5" cy="6.5" r="5.7" fill="none" stroke="#f5b078" stroke-width="1.1"/><rect x="3.3" y="3.3" width="6.4" height="6.4" rx="0.8" fill="#f5b078"/></svg><svg class="i" style="left:861.2px;top:151.5px;" width="13" height="13" viewBox="0 0 13 13"><path fill-rule="evenodd" d="M0.2 1.6 H12.8 V11.4 H0.2 Z M1.4 2.8 V8.2 L4.4 5.6 L6.6 7.4 L9.6 5 L11.6 6.6 V2.8 Z" fill="#f5b078"/><circle cx="3.4" cy="4.4" r="0.9" fill="#f5b078"/></svg><svg class="i" style="left:883.6px;top:151.5px;" width="13" height="13" viewBox="0 0 13 13"><path d="M6.6 4.6 L8.4 6.4 L2.4 12.4 C1.4 13 0 11.6 0.8 10.6 Z" fill="#f5b078"/><path d="M5.4 2.4 L8 0.6 C10 1 11.8 2.8 12.6 5.2 L11 6.6 L9.8 4.6 L8.4 5.6 Z" fill="#f5b078"/></svg><svg class="i" style="left:906.6px;top:151.5px;" width="13" height="13" viewBox="0 0 13 13"><path fill-rule="evenodd" d="M6.6 2 C10.6 1.6 13 4 12.8 6.6 C12.6 9.4 10 11 6.4 11 C2.4 11 0 8.8 0.2 6.2 C0.4 3.6 3 2.2 6.6 2 Z M8.6 6.2 A1.5 1.3 0 1 0 8.61 6.2 Z" fill="#f5b078"/><circle cx="3" cy="5.4" r="0.8" fill="#343434"/><circle cx="5" cy="4" r="0.8" fill="#343434"/><circle cx="3.2" cy="8" r="0.8" fill="#343434"/><circle cx="5.6" cy="9.2" r="0.8" fill="#343434"/><circle cx="8" cy="3.6" r="0.8" fill="#343434"/></svg><svg class="i" style="left:929.6px;top:151.5px;" width="13" height="13" viewBox="0 0 13 13"><rect x="0.40" y="1.60" width="2.6" height="2.7" fill="#f5b078"/><rect x="0.40" y="4.90" width="2.6" height="2.7" fill="#f5b078"/><rect x="0.40" y="8.20" width="2.6" height="2.7" fill="#f5b078"/><rect x="3.55" y="1.60" width="2.6" height="2.7" fill="#f5b078"/><rect x="3.55" y="4.90" width="2.6" height="2.7" fill="#f5b078"/><rect x="3.55" y="8.20" width="2.6" height="2.7" fill="#f5b078"/><rect x="6.70" y="1.60" width="2.6" height="2.7" fill="#f5b078"/><rect x="6.70" y="4.90" width="2.6" height="2.7" fill="#f5b078"/><rect x="6.70" y="8.20" width="2.6" height="2.7" fill="#f5b078"/><rect x="9.85" y="1.60" width="2.6" height="2.7" fill="#f5b078"/><rect x="9.85" y="4.90" width="2.6" height="2.7" fill="#f5b078"/><rect x="9.85" y="8.20" width="2.6" height="2.7" fill="#f5b078"/></svg><svg class="i" style="left:838.0px;top:174.5px;" width="13" height="13" viewBox="0 0 13 13"><path d="M0.8 0.8 H12 V9 L9 12.2 H0.8 Z" fill="none" stroke="#bdbdbd" stroke-width="1.1"/><path d="M3.2 4.4 H9.8 M3.2 6.8 H8.6" stroke="#bdbdbd" stroke-width="1.1"/><path d="M12 9 H9 V12.2" fill="none" stroke="#bdbdbd" stroke-width="0.8"/></svg><svg class="i" style="left:861.2px;top:174.5px;" width="13" height="13" viewBox="0 0 13 13"><path d="M6.5 0.9 L8.2 4.7 L12.3 5.1 L9.2 7.9 L10.1 12 L6.5 9.9 L2.9 12 L3.8 7.9 L0.7 5.1 L4.8 4.7 Z" fill="none" stroke="#bdbdbd" stroke-width="1.1" stroke-linejoin="round"/><path d="M6 6 L6.8 5.4 V9" stroke="#bdbdbd" stroke-width="0.9" fill="none"/></svg><svg class="i" style="left:883.6px;top:174.5px;" width="13" height="13" viewBox="0 0 13 13"><path d="M1.6 1.4 V10.8 H3.6 M1.6 6.4 H3.6 M3 2 H11.6" stroke="#bdbdbd" stroke-width="1" fill="none"/><rect x="0.4" y="0.6" width="2.4" height="2.4" fill="#bdbdbd"/><rect x="3.4" y="5.2" width="2.2" height="2.2" fill="#bdbdbd"/><rect x="3.4" y="9.6" width="2.2" height="2.2" fill="#bdbdbd"/><path d="M6.8 6.4 H11.6 M6.8 10.8 H11.6" stroke="#bdbdbd" stroke-width="1.2"/></svg><svg class="i" style="left:906.6px;top:174.5px;" width="13" height="13" viewBox="0 0 13 13"><path d="M8.4 0.8 L11.4 3.4 L4.4 9.6 L1.4 7 Z" fill="none" stroke="#bdbdbd" stroke-width="1"/><path d="M5 3.8 L8 6.4 M6.6 2.4 L9.6 5 M3.2 5.4 L6.2 8" stroke="#bdbdbd" stroke-width="0.7"/><path d="M9.4 6.8 L11.6 8.8 L7 12.4 L4.6 10.6" fill="none" stroke="#bdbdbd" stroke-width="1"/><path d="M2.8 10.4 L4.2 12.2" stroke="#bdbdbd" stroke-width="1.3"/></svg><div style="left:832.4px;top:193.3px;width:116.6px;height:14.2px;background:#343636;"></div><div class="t" style="left:840.0px;top:195.9px;font-size:7.25px;color:#c4c4c4;font-weight:700;line-height:10px;">导航器</div><svg class="i" style="left:913px;top:196.75px;" width="7.5" height="7.5" viewBox="0 0 16 16"><g fill="#b9b9b9"><rect x="6.5" y="0.2" width="3" height="4" rx="0.5" transform="rotate(0 8 8)"/><rect x="6.5" y="0.2" width="3" height="4" rx="0.5" transform="rotate(45 8 8)"/><rect x="6.5" y="0.2" width="3" height="4" rx="0.5" transform="rotate(90 8 8)"/><rect x="6.5" y="0.2" width="3" height="4" rx="0.5" transform="rotate(135 8 8)"/><rect x="6.5" y="0.2" width="3" height="4" rx="0.5" transform="rotate(180 8 8)"/><rect x="6.5" y="0.2" width="3" height="4" rx="0.5" transform="rotate(225 8 8)"/><rect x="6.5" y="0.2" width="3" height="4" rx="0.5" transform="rotate(270 8 8)"/><rect x="6.5" y="0.2" width="3" height="4" rx="0.5" transform="rotate(315 8 8)"/><circle cx="8" cy="8" r="5.9"/></g><circle cx="8" cy="8" r="3.3" fill="#3a3a3a"/><circle cx="8" cy="8" r="1.5" fill="#b9b9b9"/></svg><div style="left:924.3px;top:202.20000000000002px;width:6.8px;height:2px;background:#b4b4b4;"></div><svg class="i" style="left:935px;top:196.75px;" width="7.5" height="7.5" viewBox="0 0 16 16"><rect x="0.8" y="0.8" width="14.4" height="14.4" fill="#a4a4a4" stroke="#c4c4c4" stroke-width="1.6"/><path d="M3.6 3.6 L12.4 12.4 M12.4 3.6 L3.6 12.4" stroke="#2e2e2e" stroke-width="2.3"/></svg><div style="left:832.4px;top:207px;width:116.6px;height:125px;background:#4b4b4b;"></div><div style="left:838.8px;top:211px;width:103.2px;height:84px;background:#666;"></div><div style="left:838.8px;top:225px;width:102.6px;height:57.2px;background:#fff;"></div><div class="t" style="left:842.2px;top:298.6px;font-size:5.8px;color:#cfcfcf;font-weight:700;line-height:8px;">缩放比例</div><div class="t" style="left:880px;top:298.6px;font-size:5.8px;color:#cfcfcf;width:26.2px;text-align:right;line-height:8px;">0.46</div><div style="left:842px;top:307px;width:66px;height:3.9px;background:#606060;border-radius:1.95px;"></div><div style="left:842px;top:307px;width:24.0px;height:3.9px;background:linear-gradient(180deg,rgba(255,255,255,0.16),rgba(255,255,255,0) 45%,rgba(0,0,0,0.1)),linear-gradient(90deg,#bf7653 0%,#e09c72 55%,#ffc892 100%);border-radius:1.95px;"></div><div class="t" style="left:842.2px;top:314.4px;font-size:5.8px;color:#cfcfcf;font-weight:700;line-height:8px;">角度</div><div class="t" style="left:880px;top:314.4px;font-size:5.8px;color:#cfcfcf;width:26.2px;text-align:right;line-height:8px;">0.00</div><div style="left:842px;top:322.4px;width:66px;height:3.8px;background:#606060;border-radius:1.9px;"></div><div style="left:842px;top:322.4px;width:1.6px;height:3.8px;background:linear-gradient(180deg,rgba(255,255,255,0.16),rgba(255,255,255,0) 45%,rgba(0,0,0,0.1)),linear-gradient(90deg,#bf7653 0%,#e09c72 55%,#ffc892 100%);border-radius:0.8px;"></div><svg class="i" style="left:914px;top:300.6px;" width="12" height="11.6" viewBox="0 0 12 11.6"><path d="M0.5 3 V0.5 H3 M9 0.5 H11.5 V3 M11.5 8.6 V11.1 H9 M3 11.1 H0.5 V8.6" fill="none" stroke="#bdbdbd" stroke-width="1"/><rect x="2.7" y="2.6" width="6.6" height="6.4" fill="none" stroke="#bdbdbd" stroke-width="1"/></svg><svg class="i" style="left:931px;top:301.6px;" width="10.6" height="9.6" viewBox="0 0 10.6 9.6"><path d="M0.2 0.4 L4 4.8 L0.2 9.2 Z M10.4 0.4 L6.6 4.8 L10.4 9.2 Z" fill="#bdbdbd"/><rect x="4.8" y="0" width="1" height="9.6" fill="#bdbdbd"/></svg><svg class="i" style="left:914.4px;top:316.4px;" width="11.6" height="10.4" viewBox="0 0 11.6 10.4"><rect x="0.5" y="0.5" width="10.6" height="9.4" fill="none" stroke="#bdbdbd" stroke-width="1"/><rect x="2.6" y="2.4" width="6.4" height="5.6" fill="#666" stroke="#999" stroke-width="0.8"/></svg><svg class="i" style="left:931px;top:316.2px;" width="10.6" height="11" viewBox="0 0 10.6 11"><path d="M2.2 2.6 A4.5 4.5 0 1 1 1 6.6" fill="none" stroke="#bdbdbd" stroke-width="0.9"/><path d="M0.6 0.8 L3.8 1 L1.6 3.8 Z" fill="#bdbdbd"/><path d="M4.2 4.6 L6.6 7 M6.6 4.6 L4.2 7" stroke="#bdbdbd" stroke-width="0.8"/></svg><div style="left:832.4px;top:338.2px;width:116.6px;height:14.2px;background:#343636;"></div><div class="t" style="left:840.0px;top:340.8px;font-size:7.25px;color:#c4c4c4;font-weight:700;line-height:10px;">调色盘</div><svg class="i" style="left:913px;top:341.65000000000003px;" width="7.5" height="7.5" viewBox="0 0 16 16"><g fill="#b9b9b9"><rect x="6.5" y="0.2" width="3" height="4" rx="0.5" transform="rotate(0 8 8)"/><rect x="6.5" y="0.2" width="3" height="4" rx="0.5" transform="rotate(45 8 8)"/><rect x="6.5" y="0.2" width="3" height="4" rx="0.5" transform="rotate(90 8 8)"/><rect x="6.5" y="0.2" width="3" height="4" rx="0.5" transform="rotate(135 8 8)"/><rect x="6.5" y="0.2" width="3" height="4" rx="0.5" transform="rotate(180 8 8)"/><rect x="6.5" y="0.2" width="3" height="4" rx="0.5" transform="rotate(225 8 8)"/><rect x="6.5" y="0.2" width="3" height="4" rx="0.5" transform="rotate(270 8 8)"/><rect x="6.5" y="0.2" width="3" height="4" rx="0.5" transform="rotate(315 8 8)"/><circle cx="8" cy="8" r="5.9"/></g><circle cx="8" cy="8" r="3.3" fill="#3a3a3a"/><circle cx="8" cy="8" r="1.5" fill="#b9b9b9"/></svg><div style="left:924.3px;top:347.1px;width:6.8px;height:2px;background:#b4b4b4;"></div><svg class="i" style="left:935px;top:341.65000000000003px;" width="7.5" height="7.5" viewBox="0 0 16 16"><rect x="0.8" y="0.8" width="14.4" height="14.4" fill="#a4a4a4" stroke="#c4c4c4" stroke-width="1.6"/><path d="M3.6 3.6 L12.4 12.4 M12.4 3.6 L3.6 12.4" stroke="#2e2e2e" stroke-width="2.3"/></svg><div style="left:832.4px;top:352.4px;width:116.6px;height:130.8px;background:#4b4b4b;"></div><div style="left:838.4px;top:358px;width:14.8px;height:14.8px;background:#3c3c3c;border:1px solid #555;"></div><div style="left:892.4px;top:358.6px;width:1px;height:13.6px;background:#404040;"></div><div style="left:910.4px;top:358.6px;width:1px;height:13.6px;background:#404040;"></div><div style="left:854.6px;top:358.6px;width:1px;height:13.6px;background:#424242;"></div><svg class="i" style="left:839.4px;top:358.8px;" width="13" height="13" viewBox="0 0 13 13"><path d="M12.7 0.1 Q11.4 4.7 6.7 8.7 L4.8 7.1 Q8.4 2 12.7 0.1 Z" fill="#f7b882"/><path d="M6.4 9.1 L4.4 7.4 L3.9 8 L5.9 9.7 Z" fill="#ffdcbc"/><path d="M5.6 10 C5.4 11.9 3.2 12.6 0.4 12.8 C1.8 11.4 1.8 9.4 3.6 8.3 Z" fill="#f7b882"/></svg><svg class="i" style="left:859px;top:359px;" width="12.6" height="12.6" viewBox="0 0 12.6 12.6"><path d="M11.8 0.6 L12.2 1.2 L6 8.4 L4.6 7.2 Z" fill="#bdbdbd"/><path d="M4.2 7.6 L5.6 8.8 L2 12 L0.6 12.2 L1 10.6 Z" fill="none" stroke="#bdbdbd" stroke-width="0.8"/></svg><svg class="i" style="left:877px;top:359px;" width="12.4" height="12.6" viewBox="0 0 12.4 12.6"><path d="M9.6 0.6 C11.2 0.2 12.2 1.4 11.8 2.8 L9.8 5.2 L10.4 5.8 L9.4 6.8 L5.6 3 L6.6 2 L7.2 2.6 Z" fill="#a9a9a9"/><path d="M6.4 4.6 L1.6 9.6 L0.6 11.8 L2.6 10.8 L7.6 5.8" fill="none" stroke="#bdbdbd" stroke-width="1"/></svg><svg class="i" style="left:895px;top:358.6px;" width="12.4" height="13.6" viewBox="0 0 12.4 13.6"><path d="M6.2 6.6 L11.8 9.6 L6.2 12.8 L0.6 9.6 Z" fill="none" stroke="#bdbdbd" stroke-width="0.9"/><path d="M6.2 0.2 V5.6 M3.6 2.8 H8.8" stroke="#bdbdbd" stroke-width="0.9"/><path d="M4.4 1.2 L8 4.6 M8 1.2 L4.4 4.6" stroke="#bdbdbd" stroke-width="0.5"/><path d="M6.2 8 V10.4 M4.8 9.4 H7.6" stroke="#bdbdbd" stroke-width="0.7"/></svg><div style="left:913.0px;top:359.2px;width:5.8px;height:5.6px;background:#8a8a8a;"></div><div style="left:920.4px;top:359.2px;width:5.8px;height:5.6px;background:#ffffff;"></div><div style="left:927.8px;top:359.2px;width:5.8px;height:5.6px;background:#333333;"></div><div style="left:913.0px;top:366.0px;width:5.8px;height:5.6px;background:#5ec9dd;"></div><div style="left:920.4px;top:366.0px;width:5.8px;height:5.6px;background:#ffd690;"></div><div style="left:927.8px;top:366.0px;width:5.8px;height:5.6px;background:#8a4a00;"></div><div style="left:837.6px;top:378.2px;width:105.19999999999999px;height:101.0px;background:#3a3a3a;"></div><svg class="i" style="left:838.4px;top:379px;overflow:hidden;" width="103.6" height="99.4" viewBox="0 0 104 99"><defs><filter id="pb" x="-10%" y="-10%" width="120%" height="120%"><feGaussianBlur stdDeviation="1.3"/></filter><filter id="ps" x="-10%" y="-10%" width="120%" height="120%"><feGaussianBlur stdDeviation="0.9"/></filter></defs><rect width="104" height="99" fill="#c4663f"/><g filter="url(#pb)"><path d="M0 0H104V99H0Z" fill="#c4663f"/><path d="M0 0H12L10 14L0 30Z" fill="#b58866"/><path d="M11 2L30 0L54 0L52 10L44 20L30 22L24 34L10 36L8 22Z" fill="#ff4a12"/><path d="M8 14L30 12L32 34L14 40Z" fill="#f2551f"/><path d="M38 3L48 2L50 14L42 16Z" fill="#b5381f"/><path d="M51 0L66 0L64 4L54 5Z" fill="#2fbfc0"/><path d="M64 2L104 0L104 40L88 38L76 30L66 14Z" fill="#c2614a"/><path d="M70 6L96 4L98 24L80 28Z" fill="#b5533c"/><path d="M93 10L104 8L104 34L97 30Z" fill="#8d97a3"/><path d="M96 0L104 0L104 14L99 16Z" fill="#a8483a"/><path d="M26 12L48 8L54 22L50 38L38 36L30 26Z" fill="#dfae34"/><path d="M30 8L44 6L46 20L34 24Z" fill="#e8b838"/><path d="M49 4L61 5L67 20L66 39L55 41L49 28Z" fill="#ffe61c"/><path d="M46 22L58 26L60 40L48 40Z" fill="#ffd21a"/><path d="M62 24L72 28L76 40L66 42L60 34Z" fill="#ff9a1a"/><path d="M66 16L74 24L72 30L64 24Z" fill="#ff6a18"/><path d="M0 26L8 26L10 50L0 54Z" fill="#de1a1a"/><path d="M6 28L18 30L22 52L16 60L8 48Z" fill="#ff4259"/><path d="M10 36L20 40L20 56L12 52Z" fill="#f23a4a"/><path d="M20 28L40 36L52 44L44 62L26 60L20 44Z" fill="#c96a4b"/><path d="M24 34L40 40L36 52L24 48Z" fill="#d77a50"/><path d="M32 49L50 39L54 46L38 59Z" fill="#7d98a6"/><path d="M22 40L34 32L36 37L24 46Z" fill="#8aa0aa"/><path d="M22 56L38 52L40 60L26 66Z" fill="#6e93a3"/><path d="M47 52L62 41L77 39L75 51L62 63L49 65Z" fill="#e2e438"/><path d="M50 51L66 41L70 48L55 60Z" fill="#f6ee2c"/><path d="M58 60L70 52L72 60L62 68Z" fill="#b8cc48"/><path d="M78 40L90 36L104 38L104 78L90 80L80 70L76 54Z" fill="#27d7e8"/><path d="M82 42L100 40L102 60L86 62Z" fill="#3ee0ee"/><path d="M84 62L102 60L104 78L88 80Z" fill="#1fb9b2"/><path d="M70 52L80 48L82 66L72 70Z" fill="#48c8d8"/><path d="M0 52L12 52L20 60L18 74L0 78Z" fill="#a01a3a"/><path d="M2 58L14 58L14 72L4 74Z" fill="#8c1838"/><path d="M12 66L28 64L30 72L14 76Z" fill="#6489a9"/><path d="M16 60L26 62L24 68L16 70Z" fill="#b2304a"/><path d="M0 78L14 72L26 78L22 99L0 99Z" fill="#ff5b12"/><path d="M0 86L10 84L8 99L0 99Z" fill="#e22a12"/><path d="M12 80L24 76L26 90L16 96Z" fill="#ff7a14"/><path d="M24 70L38 64L54 66L52 99L22 99L22 84Z" fill="#ffc012"/><path d="M30 66L50 62L52 74L34 78Z" fill="#f3b21c"/><path d="M28 86L46 82L48 99L26 99Z" fill="#fff022"/><path d="M24 76L40 72L42 86L26 90Z" fill="#ffd818"/><path d="M46 72L58 68L60 88L48 92Z" fill="#5b9b99"/><path d="M44 84L54 82L54 99L46 99Z" fill="#7a9a88"/><path d="M56 80L70 72L76 78L74 99L56 99Z" fill="#f0d842"/><path d="M60 76L72 70L74 80L64 86Z" fill="#e6c93a"/><path d="M72 68L88 70L104 72L104 90L88 92L74 84Z" fill="#29a9da"/><path d="M74 66L92 68L90 78L76 78Z" fill="#22c4dc"/><path d="M88 82L104 80L104 85L90 88Z" fill="#962a44"/><path d="M86 94L104 88L104 99L82 99Z" fill="#f0d232"/><path d="M76 86L90 90L84 99L76 99Z" fill="#3aa8c8"/></g><g filter="url(#ps)" opacity="0.6"><path d="M33 34L44 12" stroke="#ffe84a" stroke-width="3.7" stroke-linecap="square" fill="none"/><path d="M29 28L38 10" stroke="#f6c63a" stroke-width="3.4" stroke-linecap="square" fill="none"/><path d="M53 36L60 12" stroke="#ffd72a" stroke-width="4.4" stroke-linecap="square" fill="none"/><path d="M57 34L63 14" stroke="#fff23a" stroke-width="2.7" stroke-linecap="square" fill="none"/><path d="M64 38L70 28" stroke="#ffb42a" stroke-width="3.4" stroke-linecap="square" fill="none"/><path d="M15 20L36 6" stroke="#e0563a" stroke-width="3.7" stroke-linecap="square" fill="none"/><path d="M12 30L26 14" stroke="#ff6a3a" stroke-width="3.4" stroke-linecap="square" fill="none"/><path d="M10 46L14 32" stroke="#ff5a6a" stroke-width="3.4" stroke-linecap="square" fill="none"/><path d="M52 60L70 44" stroke="#d0d84a" stroke-width="3.7" stroke-linecap="square" fill="none"/><path d="M50 56L64 44" stroke="#eef04a" stroke-width="2.5" stroke-linecap="square" fill="none"/><path d="M84 58L98 42" stroke="#5ae4f0" stroke-width="4.1" stroke-linecap="square" fill="none"/><path d="M80 68L92 50" stroke="#20c8d8" stroke-width="3.4" stroke-linecap="square" fill="none"/><path d="M88 76L100 64" stroke="#18a0a8" stroke-width="3.4" stroke-linecap="square" fill="none"/><path d="M28 92L44 70" stroke="#ffd030" stroke-width="4.4" stroke-linecap="square" fill="none"/><path d="M32 97L44 84" stroke="#fff040" stroke-width="3.7" stroke-linecap="square" fill="none"/><path d="M8 94L22 78" stroke="#ff8a20" stroke-width="4.1" stroke-linecap="square" fill="none"/><path d="M74 24L92 8" stroke="#c0483a" stroke-width="4.1" stroke-linecap="square" fill="none"/><path d="M78 32L98 14" stroke="#d07058" stroke-width="3.4" stroke-linecap="square" fill="none"/><path d="M96 30L102 12" stroke="#9aa2aa" stroke-width="2.7" stroke-linecap="square" fill="none"/><path d="M4 72L14 58" stroke="#7a1830" stroke-width="3.1" stroke-linecap="square" fill="none"/><path d="M14 74L28 66" stroke="#7aa0b8" stroke-width="2.4" stroke-linecap="square" fill="none"/><path d="M60 96L72 76" stroke="#e8d048" stroke-width="4.1" stroke-linecap="square" fill="none"/><path d="M64 98L74 84" stroke="#f8e860" stroke-width="2.7" stroke-linecap="square" fill="none"/><path d="M78 84L100 76" stroke="#2090c8" stroke-width="3.7" stroke-linecap="square" fill="none"/><path d="M91 35L94 38" stroke="#1a2a3a" stroke-width="1.5" stroke-linecap="square" fill="none"/><path d="M83 78L85 81" stroke="#1a3a4a" stroke-width="1.5" stroke-linecap="square" fill="none"/><path d="M28 54L44 40" stroke="#c87a58" stroke-width="3.7" stroke-linecap="square" fill="none"/><path d="M30 58L48 44" stroke="#88a0a8" stroke-width="2.4" stroke-linecap="square" fill="none"/><path d="M40 30L47 24" stroke="#e8783a" stroke-width="2.7" stroke-linecap="square" fill="none"/></g><rect x="3" y="3.6" width="5.5" height="1.2" fill="#c8a040" opacity="0.8"/><rect x="0" y="64" width="1.2" height="5" fill="#fff" opacity="0.9"/></svg><div style="left:832.4px;top:488.8px;width:116.6px;height:14.8px;background:#343636;"></div><div class="t" style="left:839.6px;top:491.7px;font-size:7.25px;color:#c4c4c4;font-weight:700;line-height:10px;">色板</div><svg class="i" style="left:913.2px;top:492.55px;" width="7.5" height="7.5" viewBox="0 0 16 16"><g fill="#b9b9b9"><rect x="6.5" y="0.2" width="3" height="4" rx="0.5" transform="rotate(0 8 8)"/><rect x="6.5" y="0.2" width="3" height="4" rx="0.5" transform="rotate(45 8 8)"/><rect x="6.5" y="0.2" width="3" height="4" rx="0.5" transform="rotate(90 8 8)"/><rect x="6.5" y="0.2" width="3" height="4" rx="0.5" transform="rotate(135 8 8)"/><rect x="6.5" y="0.2" width="3" height="4" rx="0.5" transform="rotate(180 8 8)"/><rect x="6.5" y="0.2" width="3" height="4" rx="0.5" transform="rotate(225 8 8)"/><rect x="6.5" y="0.2" width="3" height="4" rx="0.5" transform="rotate(270 8 8)"/><rect x="6.5" y="0.2" width="3" height="4" rx="0.5" transform="rotate(315 8 8)"/><circle cx="8" cy="8" r="5.9"/></g><circle cx="8" cy="8" r="3.3" fill="#3a3a3a"/><circle cx="8" cy="8" r="1.5" fill="#b9b9b9"/></svg><div style="left:924.5px;top:498.0px;width:6.8px;height:2px;background:#b4b4b4;"></div><svg class="i" style="left:935.2px;top:492.55px;" width="7.5" height="7.5" viewBox="0 0 16 16"><rect x="0.8" y="0.8" width="14.4" height="14.4" fill="#a4a4a4" stroke="#c4c4c4" stroke-width="1.6"/><path d="M3.6 3.6 L12.4 12.4 M12.4 3.6 L3.6 12.4" stroke="#2e2e2e" stroke-width="2.3"/></svg><div style="left:832.4px;top:503.6px;width:116.6px;height:115.4px;background:#4b4b4b;"></div><div style="left:838.6px;top:511.4px;width:96.6px;height:20.2px;background:#5b5b5b;"></div><svg class="i" style="left:842.6px;top:513.2px;" width="7.6" height="6" viewBox="0 0 7.6 6"><path d="M0 0.6 H3 L3.8 1.4 H7.6 V6 H0 Z" fill="#bdbdbd"/></svg><svg class="i" style="left:842.6px;top:522.6px;" width="7.6" height="6.2" viewBox="0 0 7.6 6.2"><path d="M1 0 H6.6 L7.6 3 V6.2 H0 V3 Z" fill="#d0d0d0"/><path d="M0 3.4 H7.6" stroke="#5b5b5b" stroke-width="0.8"/></svg><div class="t" style="left:859.4px;top:511.6px;font-size:6.9px;color:#d4d4d4;font-weight:700;line-height:9px;letter-spacing:0.15px;">自定义</div><div class="t" style="left:859.0px;top:521.4px;font-size:6.9px;color:#d4d4d4;font-weight:700;line-height:9px;letter-spacing:0.15px;">四色渐变</div><div style="left:936.2px;top:511.4px;width:5.8px;height:107.6px;background:#5e5e5e;"></div><div style="left:936.2px;top:511.4px;width:5.8px;height:6px;background:#555;"></div><svg class="i" style="left:936.8px;top:512.8px;" width="4.6" height="3.6" viewBox="0 0 4.6 3.6"><path d="M0.3 3.2 L2.3 0.6 L4.3 3.2" stroke="#d0d0d0" stroke-width="1.1" fill="none"/></svg><svg class="i" style="left:838.6px;top:531.6px;overflow:hidden;" width="96.6" height="87.4" viewBox="0 0 96.6 87.4"><g shape-rendering="crispEdges"><rect x="0.00" y="0.00" width="9.96" height="9.90" fill="rgb(255,52,0)"/><rect x="9.66" y="0.00" width="9.96" height="9.90" fill="rgb(255,72,1)"/><rect x="19.32" y="0.00" width="9.96" height="9.90" fill="rgb(255,92,3)"/><rect x="28.98" y="0.00" width="9.96" height="9.90" fill="rgb(255,113,8)"/><rect x="38.64" y="0.00" width="9.96" height="9.90" fill="rgb(255,133,14)"/><rect x="48.30" y="0.00" width="9.96" height="9.90" fill="rgb(255,153,22)"/><rect x="57.96" y="0.00" width="9.96" height="9.90" fill="rgb(255,173,31)"/><rect x="67.62" y="0.00" width="9.96" height="9.90" fill="rgb(255,194,42)"/><rect x="77.28" y="0.00" width="9.96" height="9.90" fill="rgb(255,214,55)"/><rect x="86.94" y="0.00" width="9.96" height="9.90" fill="rgb(255,234,70)"/><rect x="0.00" y="9.60" width="9.96" height="9.90" fill="rgb(245,47,2)"/><rect x="9.66" y="9.60" width="9.96" height="9.90" fill="rgb(246,67,4)"/><rect x="19.32" y="9.60" width="9.96" height="9.90" fill="rgb(247,87,8)"/><rect x="28.98" y="9.60" width="9.96" height="9.90" fill="rgb(249,106,13)"/><rect x="38.64" y="9.60" width="9.96" height="9.90" fill="rgb(250,126,20)"/><rect x="48.30" y="9.60" width="9.96" height="9.90" fill="rgb(251,146,28)"/><rect x="57.96" y="9.60" width="9.96" height="9.90" fill="rgb(252,166,38)"/><rect x="67.62" y="9.60" width="9.96" height="9.90" fill="rgb(253,185,49)"/><rect x="77.28" y="9.60" width="9.96" height="9.90" fill="rgb(254,205,62)"/><rect x="86.94" y="9.60" width="9.96" height="9.90" fill="rgb(255,225,76)"/><rect x="0.00" y="19.20" width="9.96" height="9.90" fill="rgb(236,43,4)"/><rect x="9.66" y="19.20" width="9.96" height="9.90" fill="rgb(238,62,7)"/><rect x="19.32" y="19.20" width="9.96" height="9.90" fill="rgb(240,81,12)"/><rect x="28.98" y="19.20" width="9.96" height="9.90" fill="rgb(242,100,18)"/><rect x="38.64" y="19.20" width="9.96" height="9.90" fill="rgb(244,119,25)"/><rect x="48.30" y="19.20" width="9.96" height="9.90" fill="rgb(246,139,34)"/><rect x="57.96" y="19.20" width="9.96" height="9.90" fill="rgb(249,158,44)"/><rect x="67.62" y="19.20" width="9.96" height="9.90" fill="rgb(251,177,56)"/><rect x="77.28" y="19.20" width="9.96" height="9.90" fill="rgb(253,196,69)"/><rect x="86.94" y="19.20" width="9.96" height="9.90" fill="rgb(255,215,83)"/><rect x="0.00" y="28.80" width="9.96" height="9.90" fill="rgb(226,38,5)"/><rect x="9.66" y="28.80" width="9.96" height="9.90" fill="rgb(229,57,10)"/><rect x="19.32" y="28.80" width="9.96" height="9.90" fill="rgb(232,75,16)"/><rect x="28.98" y="28.80" width="9.96" height="9.90" fill="rgb(236,94,23)"/><rect x="38.64" y="28.80" width="9.96" height="9.90" fill="rgb(239,113,31)"/><rect x="48.30" y="28.80" width="9.96" height="9.90" fill="rgb(242,131,40)"/><rect x="57.96" y="28.80" width="9.96" height="9.90" fill="rgb(245,150,51)"/><rect x="67.62" y="28.80" width="9.96" height="9.90" fill="rgb(249,169,63)"/><rect x="77.28" y="28.80" width="9.96" height="9.90" fill="rgb(252,187,75)"/><rect x="86.94" y="28.80" width="9.96" height="9.90" fill="rgb(255,206,89)"/><rect x="0.00" y="38.40" width="9.96" height="9.90" fill="rgb(216,33,7)"/><rect x="9.66" y="38.40" width="9.96" height="9.90" fill="rgb(221,51,13)"/><rect x="19.32" y="38.40" width="9.96" height="9.90" fill="rgb(225,70,20)"/><rect x="28.98" y="38.40" width="9.96" height="9.90" fill="rgb(229,88,28)"/><rect x="38.64" y="38.40" width="9.96" height="9.90" fill="rgb(234,106,37)"/><rect x="48.30" y="38.40" width="9.96" height="9.90" fill="rgb(238,124,47)"/><rect x="57.96" y="38.40" width="9.96" height="9.90" fill="rgb(242,142,58)"/><rect x="67.62" y="38.40" width="9.96" height="9.90" fill="rgb(246,160,69)"/><rect x="77.28" y="38.40" width="9.96" height="9.90" fill="rgb(251,179,82)"/><rect x="86.94" y="38.40" width="9.96" height="9.90" fill="rgb(255,197,96)"/><rect x="0.00" y="48.00" width="9.96" height="9.90" fill="rgb(207,29,9)"/><rect x="9.66" y="48.00" width="9.96" height="9.90" fill="rgb(212,46,16)"/><rect x="19.32" y="48.00" width="9.96" height="9.90" fill="rgb(217,64,24)"/><rect x="28.98" y="48.00" width="9.96" height="9.90" fill="rgb(223,82,33)"/><rect x="38.64" y="48.00" width="9.96" height="9.90" fill="rgb(228,99,43)"/><rect x="48.30" y="48.00" width="9.96" height="9.90" fill="rgb(234,117,53)"/><rect x="57.96" y="48.00" width="9.96" height="9.90" fill="rgb(239,134,64)"/><rect x="67.62" y="48.00" width="9.96" height="9.90" fill="rgb(244,152,76)"/><rect x="77.28" y="48.00" width="9.96" height="9.90" fill="rgb(250,170,89)"/><rect x="86.94" y="48.00" width="9.96" height="9.90" fill="rgb(255,187,102)"/><rect x="0.00" y="57.60" width="9.96" height="9.90" fill="rgb(197,24,11)"/><rect x="9.66" y="57.60" width="9.96" height="9.90" fill="rgb(203,41,19)"/><rect x="19.32" y="57.60" width="9.96" height="9.90" fill="rgb(210,58,28)"/><rect x="28.98" y="57.60" width="9.96" height="9.90" fill="rgb(216,75,38)"/><rect x="38.64" y="57.60" width="9.96" height="9.90" fill="rgb(223,92,48)"/><rect x="48.30" y="57.60" width="9.96" height="9.90" fill="rgb(229,110,59)"/><rect x="57.96" y="57.60" width="9.96" height="9.90" fill="rgb(236,127,71)"/><rect x="67.62" y="57.60" width="9.96" height="9.90" fill="rgb(242,144,83)"/><rect x="77.28" y="57.60" width="9.96" height="9.90" fill="rgb(249,161,95)"/><rect x="86.94" y="57.60" width="9.96" height="9.90" fill="rgb(255,178,109)"/><rect x="0.00" y="67.20" width="9.96" height="9.90" fill="rgb(187,19,12)"/><rect x="9.66" y="67.20" width="9.96" height="9.90" fill="rgb(195,36,22)"/><rect x="19.32" y="67.20" width="9.96" height="9.90" fill="rgb(202,53,33)"/><rect x="28.98" y="67.20" width="9.96" height="9.90" fill="rgb(210,69,43)"/><rect x="38.64" y="67.20" width="9.96" height="9.90" fill="rgb(217,86,54)"/><rect x="48.30" y="67.20" width="9.96" height="9.90" fill="rgb(225,102,66)"/><rect x="57.96" y="67.20" width="9.96" height="9.90" fill="rgb(232,119,77)"/><rect x="67.62" y="67.20" width="9.96" height="9.90" fill="rgb(240,135,90)"/><rect x="77.28" y="67.20" width="9.96" height="9.90" fill="rgb(247,152,102)"/><rect x="86.94" y="67.20" width="9.96" height="9.90" fill="rgb(255,169,115)"/><rect x="0.00" y="76.80" width="9.96" height="9.90" fill="rgb(178,15,14)"/><rect x="9.66" y="76.80" width="9.96" height="9.90" fill="rgb(186,31,25)"/><rect x="19.32" y="76.80" width="9.96" height="9.90" fill="rgb(195,47,37)"/><rect x="28.98" y="76.80" width="9.96" height="9.90" fill="rgb(203,63,48)"/><rect x="38.64" y="76.80" width="9.96" height="9.90" fill="rgb(212,79,60)"/><rect x="48.30" y="76.80" width="9.96" height="9.90" fill="rgb(221,95,72)"/><rect x="57.96" y="76.80" width="9.96" height="9.90" fill="rgb(229,111,84)"/><rect x="67.62" y="76.80" width="9.96" height="9.90" fill="rgb(238,127,96)"/><rect x="77.28" y="76.80" width="9.96" height="9.90" fill="rgb(246,143,109)"/><rect x="86.94" y="76.80" width="9.96" height="9.90" fill="rgb(255,159,122)"/><rect x="0.00" y="86.40" width="9.96" height="9.90" fill="rgb(168,10,16)"/><rect x="9.66" y="86.40" width="9.96" height="9.90" fill="rgb(178,26,28)"/><rect x="19.32" y="86.40" width="9.96" height="9.90" fill="rgb(187,41,41)"/><rect x="28.98" y="86.40" width="9.96" height="9.90" fill="rgb(197,57,53)"/><rect x="38.64" y="86.40" width="9.96" height="9.90" fill="rgb(207,72,66)"/><rect x="48.30" y="86.40" width="9.96" height="9.90" fill="rgb(216,88,78)"/><rect x="57.96" y="86.40" width="9.96" height="9.90" fill="rgb(226,103,91)"/><rect x="67.62" y="86.40" width="9.96" height="9.90" fill="rgb(236,119,103)"/><rect x="77.28" y="86.40" width="9.96" height="9.90" fill="rgb(245,134,116)"/><rect x="86.94" y="86.40" width="9.96" height="9.90" fill="rgb(255,150,128)"/></g><rect x="0.5" y="0.5" width="8.8" height="9" fill="none" stroke="#9a9a9a" stroke-width="1"/><rect x="87.24" y="0.5" width="8.8" height="9" fill="none" stroke="#9a9a9a" stroke-width="1"/></svg><svg class="i" style="left:939px;top:609px;" width="10" height="10" viewBox="0 0 10 10"><path d="M10 0 V10 H0 A10 10 0 0 0 10 0 Z" fill="#fff"/></svg><svg class="i" style="left:25.7px;top:609px;" width="10" height="10" viewBox="0 0 10 10"><path d="M0 0 V10 H10 A10 10 0 0 1 0 0 Z" fill="#fff"/></svg>
</div></body></html>
